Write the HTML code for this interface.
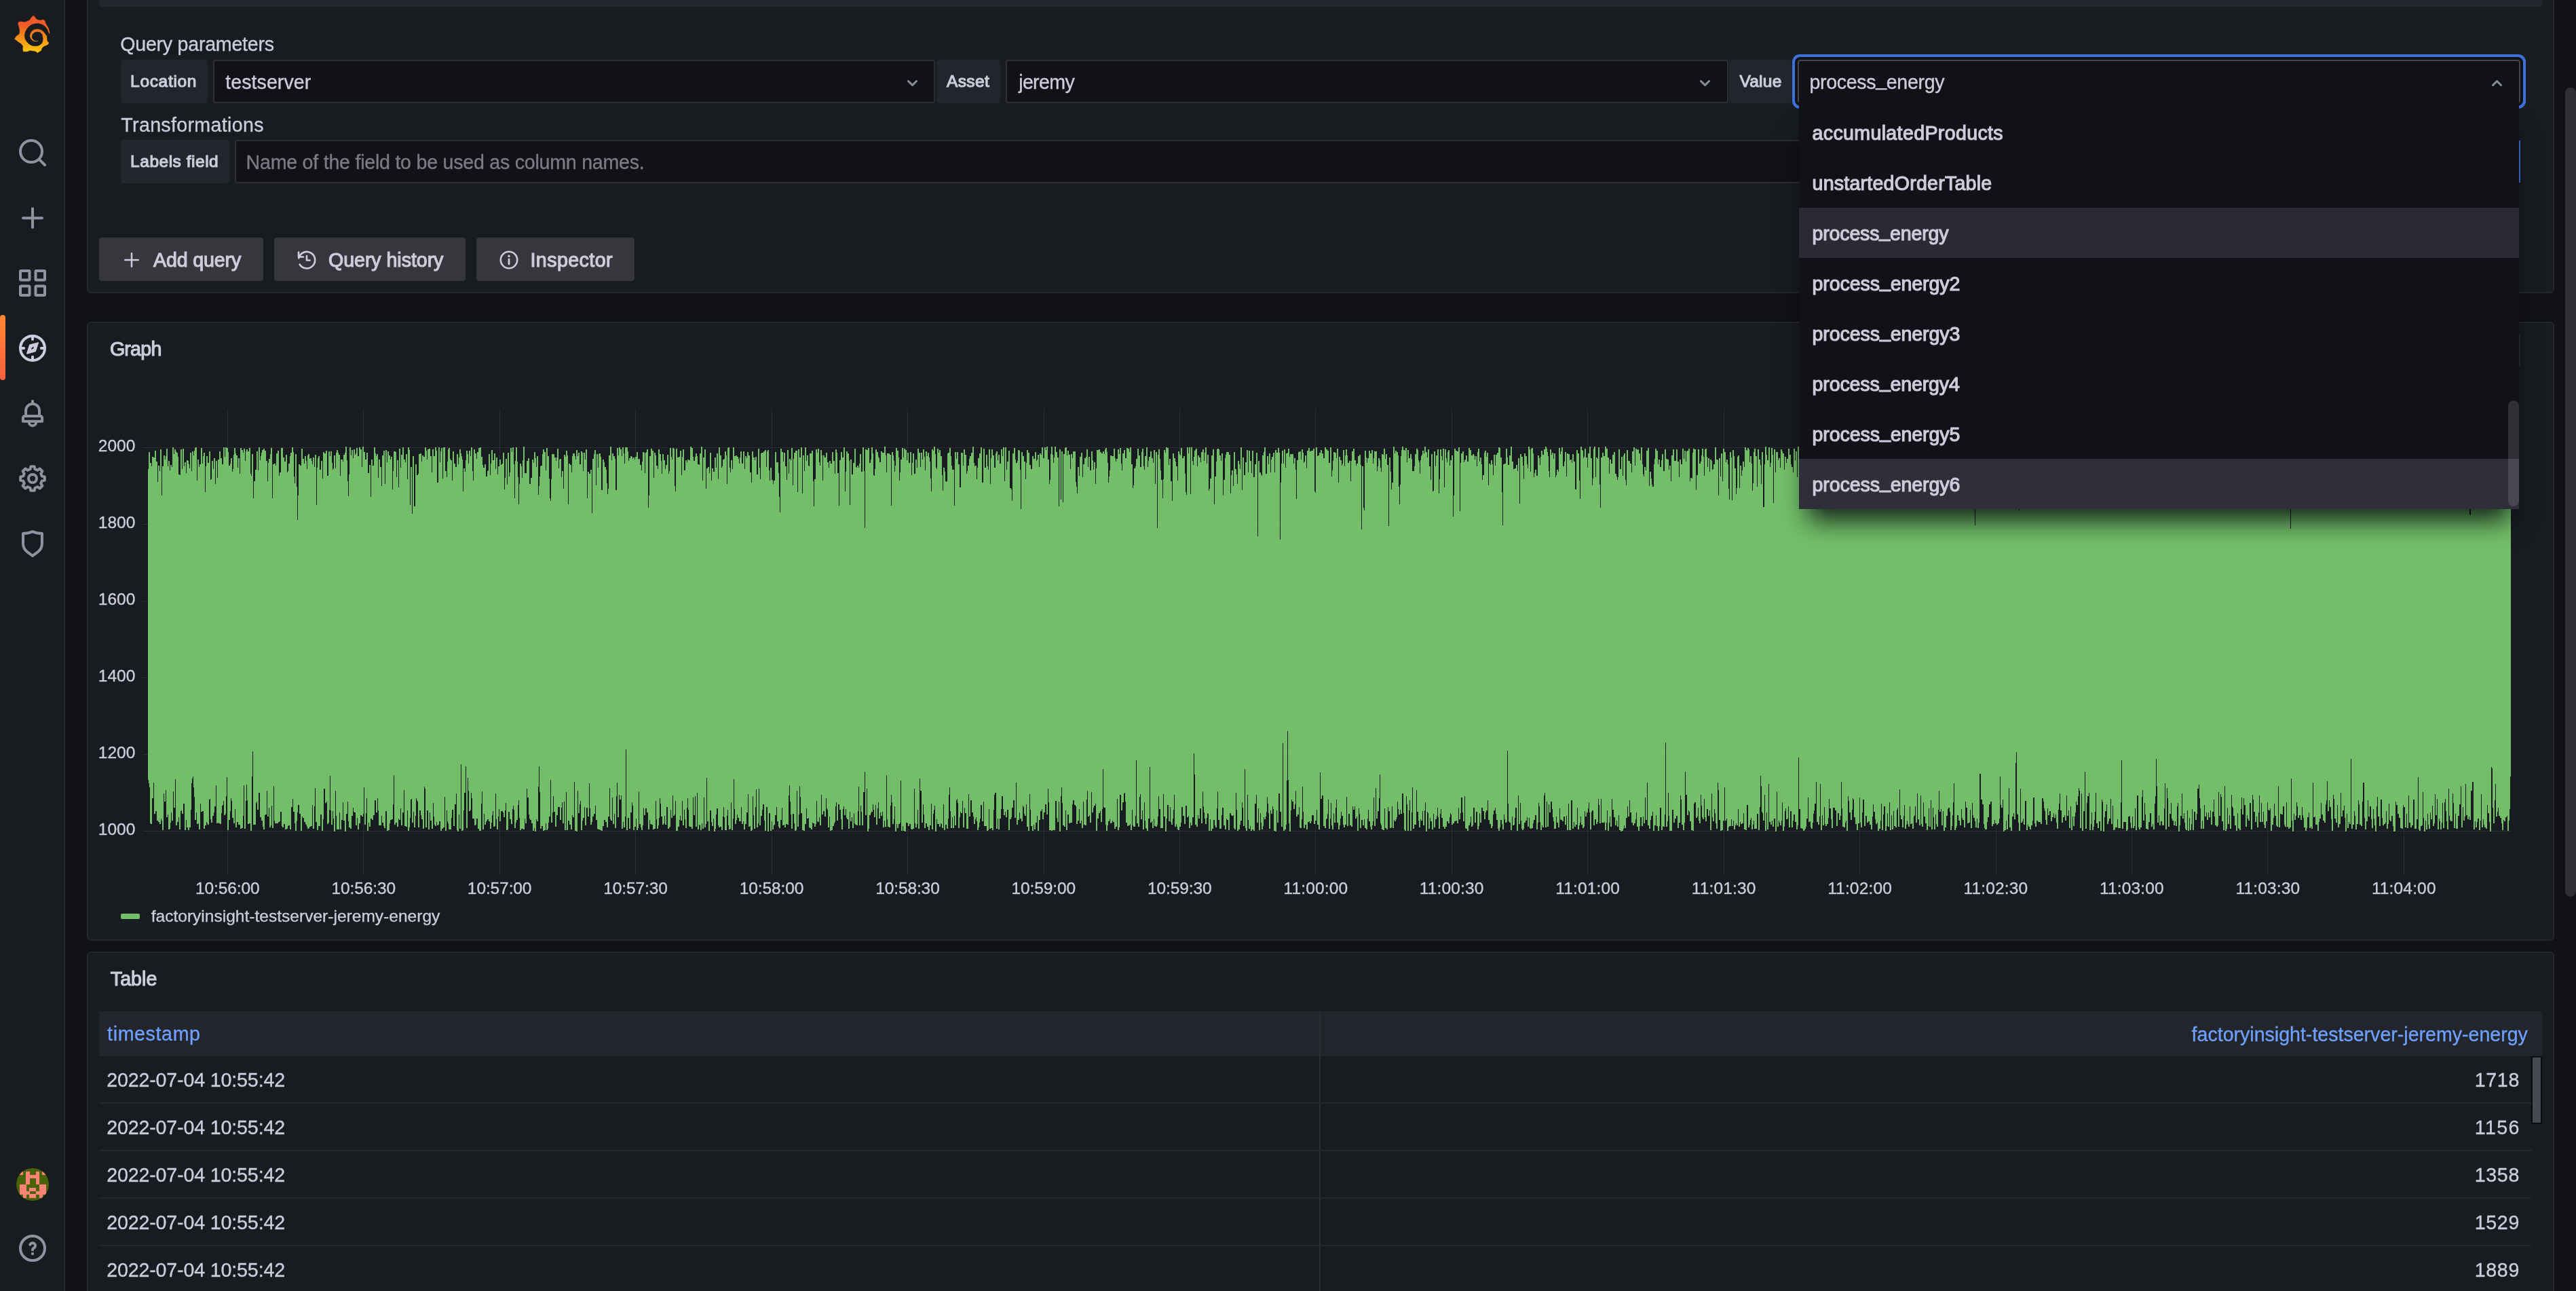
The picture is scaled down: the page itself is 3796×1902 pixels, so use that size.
<!DOCTYPE html>
<html><head><meta charset="utf-8"><title>Explore - Grafana</title><style>
html,body{margin:0;padding:0;}
body{width:3796px;height:1902px;overflow:hidden;background:#111217;position:relative;font-family:"Liberation Sans", sans-serif;}
.a{position:absolute;box-sizing:border-box;}
.t{white-space:pre;transform:translateZ(0);}
.u{position:relative;top:-4.5px;}
.p{background:#181b1f;border:2px solid #25272c;border-radius:6px;}
.lb{background:#22252b;border-radius:4px;}
.sel{background:#111217;border:2px solid #2d2e35;border-radius:4px;}
.btn{background:#35373d;border-radius:4px;}
</style></head><body>
<div class="a p" style="left:128px;top:-20px;width:3636px;height:452px;"></div>
<div class="a " style="left:146px;top:-10px;width:3600px;height:20px;background:#22252b;border-radius:4px;"></div>
<div class="a p" style="left:128px;top:474px;width:3636px;height:912px;"></div>
<div class="a p" style="left:128px;top:1402px;width:3636px;height:528px;"></div>
<div class="a " style="left:0px;top:0px;width:96px;height:1902px;background:#181b1f;border-right:2px solid #25272c;"></div>
<div class="a " style="left:0px;top:464px;width:8px;height:96px;background:linear-gradient(0deg,#f55f3e 0%,#ff8833 100%);border-radius:4px;"></div>
<svg class="a" style="left:0px;top:0px;" width="96" height="1902" viewBox="0 0 96 1902"><defs><linearGradient id="lg" x1="0" y1="0" x2="0" y2="1"><stop offset="0" stop-color="#f05a28"/><stop offset="0.25" stop-color="#f05a28"/><stop offset="1" stop-color="#fbca0a"/></linearGradient><clipPath id="av"><circle cx="48" cy="1745" r="24"/></clipPath></defs><polygon points="49.23,23.02 51.46,25.11 54.01,28.60 58.89,29.99 63.77,29.06 66.09,30.46 67.02,33.94 69.12,37.66 71.44,41.84 72.83,46.49 73.07,49.74 70.97,51.60 68.88,53.46 69.12,57.17 69.67,60.43 72.14,63.45 70.04,66.00 64.47,68.33 61.68,71.12 60.75,74.37 55.17,77.85 52.39,75.53 44.02,74.37 39.84,75.99 34.26,75.76 33.57,71.12 34.26,68.33 31.48,64.61 27.29,61.82 21.25,57.17 24.04,53.46 28.69,49.74 29.15,44.16 26.83,35.33 26.60,33.24 29.62,31.85 37.52,32.55 44.02,29.29 45.88,26.04" fill="url(#lg)" stroke="url(#lg)" stroke-width="0.3" stroke-linejoin="round"/><polygon points="73.76,50.44 73.07,50.20 71.44,48.35 69.58,43.23 66.33,39.05 62.14,36.26 57.50,34.87 52.85,34.78 48.20,35.80 44.02,38.12 40.30,41.84 37.52,46.49 36.22,52.06 37.05,57.17 39.38,61.36 43.09,65.07 47.28,67.17 51.46,67.86 55.64,67.40 59.36,65.77 61.68,63.45 62.84,60.43 63.17,56.71 62.52,52.76 61.68,50.20 59.36,47.88 55.17,46.95 51.46,47.65 48.67,49.74 47.18,52.99 47.51,56.25 49.13,58.57 51.92,59.96 54.71,60.06 56.20,59.41 56.34,60.43 54.25,61.50 50.53,61.36 47.28,59.50 44.95,56.71 43.65,53.46 44.25,49.74 46.35,46.02 50.06,43.23 54.71,42.30 58.89,43.00 62.61,45.09 65.86,48.35 67.95,51.60 69.12,52.76 73.76,52.76" fill="#181b1f" stroke="#181b1f" stroke-width="0.6" stroke-linejoin="round"/><g fill="none" stroke="#9192a0" stroke-width="4" stroke-linecap="round"><circle cx="46" cy="223" r="16"/><path d="M57.8,234.8L66,243"/></g><path d="M34,321.2H62M48,307.3V335.1" fill="none" stroke="#9192a0" stroke-width="4" stroke-linecap="round"/><rect x="30" y="399" width="13.5" height="13.5" rx="1" fill="none" stroke="#9192a0" stroke-width="4"/><rect x="52.5" y="399" width="13.5" height="13.5" rx="1" fill="none" stroke="#9192a0" stroke-width="4"/><rect x="30" y="421.5" width="13.5" height="13.5" rx="1" fill="none" stroke="#9192a0" stroke-width="4"/><rect x="52.5" y="421.5" width="13.5" height="13.5" rx="1" fill="none" stroke="#9192a0" stroke-width="4"/><circle cx="48" cy="512.9" r="18" fill="none" stroke="#ccccdc" stroke-width="4"/><path d="M48,496.9v3.2M48,528.9v-3.2M32,512.9h3.2M64,512.9h-3.2" stroke="#ccccdc" stroke-width="4" stroke-linecap="round" fill="none"/><path fill-rule="evenodd" fill="#ccccdc" stroke="#ccccdc" stroke-width="1.6" stroke-linejoin="round" d="M56.2,504.9L52.2,517.5L39.8,520.9L43.8,508.29999999999995Z M51.4,509.5L49.7,514.3L44.6,516.3L46.3,511.5Z"/><g fill="none" stroke="#9192a0" stroke-width="4" stroke-linecap="round" stroke-linejoin="round" transform="translate(18,579)"><path d="M30,12V14.5"/><path d="M20.1,34V26A9.95,10.1 0 0 1 40,26V34"/><path d="M18.6,34.1H41.4A2.7,2.7 0 0 1 44.1,36.8V41.8H15.9V36.8A2.7,2.7 0 0 1 18.6,34.1Z"/><path d="M24.8,43A5.2,5.2 0 0 0 35.2,43"/></g><polygon points="44.44,691.25 45.34,687.20 50.66,687.20 51.56,691.25 55.21,692.76 58.71,690.53 62.47,694.29 60.24,697.79 61.75,701.44 65.80,702.34 65.80,707.66 61.75,708.56 60.24,712.21 62.47,715.71 58.71,719.47 55.21,717.24 51.56,718.75 50.66,722.80 45.34,722.80 44.44,718.75 40.79,717.24 37.29,719.47 33.53,715.71 35.76,712.21 34.25,708.56 30.20,707.66 30.20,702.34 34.25,701.44 35.76,697.79 33.53,694.29 37.29,690.53 40.79,692.76" fill="none" stroke="#9192a0" stroke-width="4" stroke-linejoin="round"/><circle cx="48" cy="705" r="6" fill="none" stroke="#9192a0" stroke-width="4"/><path d="M34.03,786.10 Q42.16,785.87 47.97,783.17 Q53.78,785.87 61.91,786.10 V801.67 Q61.68,808.17 56.10,812.82 L47.97,818.86 L39.84,812.82 Q34.26,808.17 34.03,801.67 Z" fill="none" stroke="#9192a0" stroke-width="4" stroke-linejoin="round"/><g clip-path="url(#av)"><rect x="24" y="1721" width="48" height="48" fill="#4a630b"/><rect x="28.80" y="1725.80" width="5.20" height="5.20" fill="#ff8277" shape-rendering="crispEdges"/><rect x="38.40" y="1725.80" width="5.20" height="5.20" fill="#ff8277" shape-rendering="crispEdges"/><rect x="52.80" y="1725.80" width="5.20" height="5.20" fill="#ff8277" shape-rendering="crispEdges"/><rect x="62.40" y="1725.80" width="5.20" height="5.20" fill="#ff8277" shape-rendering="crispEdges"/><rect x="38.40" y="1730.60" width="5.20" height="5.20" fill="#ff8277" shape-rendering="crispEdges"/><rect x="43.20" y="1730.60" width="5.20" height="5.20" fill="#ff8277" shape-rendering="crispEdges"/><rect x="48.00" y="1730.60" width="5.20" height="5.20" fill="#ff8277" shape-rendering="crispEdges"/><rect x="52.80" y="1730.60" width="5.20" height="5.20" fill="#ff8277" shape-rendering="crispEdges"/><rect x="38.40" y="1735.40" width="5.20" height="5.20" fill="#ff8277" shape-rendering="crispEdges"/><rect x="52.80" y="1735.40" width="5.20" height="5.20" fill="#ff8277" shape-rendering="crispEdges"/><rect x="38.40" y="1740.20" width="5.20" height="5.20" fill="#ff8277" shape-rendering="crispEdges"/><rect x="52.80" y="1740.20" width="5.20" height="5.20" fill="#ff8277" shape-rendering="crispEdges"/><rect x="28.80" y="1745.00" width="5.20" height="5.20" fill="#ff8277" shape-rendering="crispEdges"/><rect x="33.60" y="1745.00" width="5.20" height="5.20" fill="#ff8277" shape-rendering="crispEdges"/><rect x="57.60" y="1745.00" width="5.20" height="5.20" fill="#ff8277" shape-rendering="crispEdges"/><rect x="62.40" y="1745.00" width="5.20" height="5.20" fill="#ff8277" shape-rendering="crispEdges"/><rect x="28.80" y="1749.80" width="5.20" height="5.20" fill="#ff8277" shape-rendering="crispEdges"/><rect x="33.60" y="1749.80" width="5.20" height="5.20" fill="#ff8277" shape-rendering="crispEdges"/><rect x="43.20" y="1749.80" width="5.20" height="5.20" fill="#ff8277" shape-rendering="crispEdges"/><rect x="48.00" y="1749.80" width="5.20" height="5.20" fill="#ff8277" shape-rendering="crispEdges"/><rect x="57.60" y="1749.80" width="5.20" height="5.20" fill="#ff8277" shape-rendering="crispEdges"/><rect x="62.40" y="1749.80" width="5.20" height="5.20" fill="#ff8277" shape-rendering="crispEdges"/><rect x="28.80" y="1754.60" width="5.20" height="5.20" fill="#ff8277" shape-rendering="crispEdges"/><rect x="33.60" y="1754.60" width="5.20" height="5.20" fill="#ff8277" shape-rendering="crispEdges"/><rect x="38.40" y="1754.60" width="5.20" height="5.20" fill="#ff8277" shape-rendering="crispEdges"/><rect x="52.80" y="1754.60" width="5.20" height="5.20" fill="#ff8277" shape-rendering="crispEdges"/><rect x="57.60" y="1754.60" width="5.20" height="5.20" fill="#ff8277" shape-rendering="crispEdges"/><rect x="62.40" y="1754.60" width="5.20" height="5.20" fill="#ff8277" shape-rendering="crispEdges"/><rect x="33.60" y="1759.40" width="5.20" height="5.20" fill="#ff8277" shape-rendering="crispEdges"/><rect x="43.20" y="1759.40" width="5.20" height="5.20" fill="#ff8277" shape-rendering="crispEdges"/><rect x="48.00" y="1759.40" width="5.20" height="5.20" fill="#ff8277" shape-rendering="crispEdges"/><rect x="57.60" y="1759.40" width="5.20" height="5.20" fill="#ff8277" shape-rendering="crispEdges"/></g><g fill="none" stroke="#9192a0" stroke-width="4" stroke-linecap="round" stroke-linejoin="round" transform="translate(18,1809)"><circle cx="30" cy="30" r="18"/><path d="M26.3,24.6A4,4 0 1 1 32.5,29.3Q30,30.6 30,32.6"/></g><circle cx="48" cy="1847.1" r="2.15" fill="#9192a0"/></svg>
<span class="a t" style="left:177.30px;top:51.29px;font-size:28.6px;line-height:28.6px;color:#ccccdc;letter-spacing:-0.249px;-webkit-text-stroke:0.35px #ccccdc;">Query parameters</span>
<div class="a lb" style="left:178px;top:88px;width:128px;height:64px;"></div>
<span class="a t" style="left:192.10px;top:108.26px;font-size:24.5px;line-height:24.5px;color:#ccccdc;letter-spacing:0.671px;-webkit-text-stroke:1.15px #ccccdc;">Location</span>
<div class="a sel" style="left:314px;top:88px;width:1064px;height:64px;"></div>
<span class="a t" style="left:332.30px;top:106.59px;font-size:28.6px;line-height:28.6px;color:#ccccdc;letter-spacing:0.043px;-webkit-text-stroke:0.35px #ccccdc;">testserver</span>
<div class="a lb" style="left:1380px;top:88px;width:94px;height:64px;"></div>
<span class="a t" style="left:1395.00px;top:108.26px;font-size:24.5px;line-height:24.5px;color:#ccccdc;letter-spacing:0.383px;-webkit-text-stroke:1.15px #ccccdc;">Asset</span>
<div class="a sel" style="left:1482px;top:88px;width:1065px;height:64px;"></div>
<span class="a t" style="left:1501.20px;top:106.59px;font-size:28.6px;line-height:28.6px;color:#ccccdc;letter-spacing:-0.660px;-webkit-text-stroke:0.35px #ccccdc;">jeremy</span>
<div class="a lb" style="left:2548px;top:88px;width:92px;height:64px;"></div>
<span class="a t" style="left:2563.40px;top:108.26px;font-size:24.5px;line-height:24.5px;color:#ccccdc;letter-spacing:0.271px;-webkit-text-stroke:1.15px #ccccdc;">Value</span>
<span class="a t" style="left:178.30px;top:169.99px;font-size:28.6px;line-height:28.6px;color:#ccccdc;letter-spacing:0.334px;-webkit-text-stroke:0.35px #ccccdc;">Transformations</span>
<div class="a lb" style="left:178px;top:206px;width:160px;height:64px;"></div>
<span class="a t" style="left:192.10px;top:226.46px;font-size:24.5px;line-height:24.5px;color:#ccccdc;letter-spacing:0.516px;-webkit-text-stroke:1.15px #ccccdc;">Labels field</span>
<div class="a sel" style="left:346px;top:206px;width:3368px;height:64px;"></div>
<div class="a " style="left:3712px;top:207px;width:2px;height:62px;background:#3d71d9;"></div>
<span class="a t" style="left:362.60px;top:225.19px;font-size:28.6px;line-height:28.6px;color:#7b7b86;letter-spacing:-0.238px;-webkit-text-stroke:0.35px #7b7b86;">Name of the field to be used as column names.</span>
<svg class="a" style="left:1337px;top:118px;" width="15" height="9" viewBox="0 0 15 9"><path d="M1.5,1.5 L7.5,7.5 L13.5,1.5" fill="none" stroke="#8a8b98" stroke-width="3" stroke-linecap="round" stroke-linejoin="round"/></svg>
<svg class="a" style="left:2505px;top:118px;" width="15" height="9" viewBox="0 0 15 9"><path d="M1.5,1.5 L7.5,7.5 L13.5,1.5" fill="none" stroke="#8a8b98" stroke-width="3" stroke-linecap="round" stroke-linejoin="round"/></svg>
<div class="a btn" style="left:146px;top:350px;width:242px;height:64px;"></div>
<span class="a t" style="left:226.10px;top:368.89px;font-size:28.6px;line-height:28.6px;color:#ccccdc;letter-spacing:-0.156px;-webkit-text-stroke:1.15px #ccccdc;">Add query</span>
<div class="a btn" style="left:404px;top:350px;width:282px;height:64px;"></div>
<span class="a t" style="left:484.00px;top:368.99px;font-size:28.6px;line-height:28.6px;color:#ccccdc;letter-spacing:-0.052px;-webkit-text-stroke:1.15px #ccccdc;">Query history</span>
<div class="a btn" style="left:702px;top:350px;width:233px;height:64px;"></div>
<span class="a t" style="left:781.50px;top:368.99px;font-size:28.6px;line-height:28.6px;color:#ccccdc;letter-spacing:0.426px;-webkit-text-stroke:1.15px #ccccdc;">Inspector</span>
<svg class="a" style="left:182px;top:371px;" width="24" height="24" viewBox="0 0 24 24"><path d="M12,2.3V21.7M2.3,12H21.7" stroke="#ccccdc" stroke-width="2.5" stroke-linecap="round" fill="none"/></svg>
<svg class="a" style="left:437px;top:368px;" width="30" height="30" viewBox="0 0 30 30"><g fill="none" stroke="#ccccdc" stroke-width="2.6" stroke-linecap="round" stroke-linejoin="round"><path d="M3.2,12.2 A12.2,12.2 0 1 1 4.6,21.5"/><path d="M3,3.5 V10.5 H10"/><path d="M15,9 V15.5 H19.5"/></g></svg>
<svg class="a" style="left:735px;top:368px;" width="30" height="30" viewBox="0 0 30 30"><circle cx="15" cy="15" r="12.2" fill="none" stroke="#ccccdc" stroke-width="2.6"/><path d="M15,14 V21" stroke="#ccccdc" stroke-width="2.8" stroke-linecap="round"/><circle cx="15" cy="9.3" r="1.7" fill="#ccccdc"/></svg>
<span class="a t" style="left:161.90px;top:500.09px;font-size:28.6px;line-height:28.6px;color:#ccccdc;letter-spacing:-0.767px;-webkit-text-stroke:1.15px #ccccdc;">Graph</span>
<div class="a " style="left:210px;top:659px;width:3490px;height:1px;background:#2b2e33;"></div>
<span class="a t" style="left:144.70px;top:645.46px;font-size:24.5px;line-height:24.5px;color:#ccccdc;letter-spacing:0.074px;-webkit-text-stroke:0.35px #ccccdc;">2000</span>
<div class="a " style="left:210px;top:772px;width:3490px;height:1px;background:#2b2e33;"></div>
<span class="a t" style="left:144.70px;top:758.46px;font-size:24.5px;line-height:24.5px;color:#ccccdc;letter-spacing:0.074px;-webkit-text-stroke:0.35px #ccccdc;">1800</span>
<div class="a " style="left:210px;top:885px;width:3490px;height:1px;background:#2b2e33;"></div>
<span class="a t" style="left:144.70px;top:871.46px;font-size:24.5px;line-height:24.5px;color:#ccccdc;letter-spacing:0.074px;-webkit-text-stroke:0.35px #ccccdc;">1600</span>
<div class="a " style="left:210px;top:998px;width:3490px;height:1px;background:#2b2e33;"></div>
<span class="a t" style="left:144.70px;top:984.46px;font-size:24.5px;line-height:24.5px;color:#ccccdc;letter-spacing:0.074px;-webkit-text-stroke:0.35px #ccccdc;">1400</span>
<div class="a " style="left:210px;top:1111px;width:3490px;height:1px;background:#2b2e33;"></div>
<span class="a t" style="left:144.70px;top:1097.46px;font-size:24.5px;line-height:24.5px;color:#ccccdc;letter-spacing:0.074px;-webkit-text-stroke:0.35px #ccccdc;">1200</span>
<div class="a " style="left:210px;top:1224px;width:3490px;height:1px;background:#2b2e33;"></div>
<span class="a t" style="left:144.70px;top:1210.46px;font-size:24.5px;line-height:24.5px;color:#ccccdc;letter-spacing:0.074px;-webkit-text-stroke:0.35px #ccccdc;">1000</span>
<div class="a " style="left:335px;top:602px;width:1px;height:687px;background:#2b2e33;"></div>
<span class="a t" style="left:288.00px;top:1296.86px;font-size:24.5px;line-height:24.5px;color:#ccccdc;letter-spacing:-0.106px;-webkit-text-stroke:0.35px #ccccdc;">10:56:00</span>
<div class="a " style="left:535px;top:602px;width:1px;height:687px;background:#2b2e33;"></div>
<span class="a t" style="left:488.43px;top:1296.86px;font-size:24.5px;line-height:24.5px;color:#ccccdc;letter-spacing:-0.106px;-webkit-text-stroke:0.35px #ccccdc;">10:56:30</span>
<div class="a " style="left:736px;top:602px;width:1px;height:687px;background:#2b2e33;"></div>
<span class="a t" style="left:688.86px;top:1296.86px;font-size:24.5px;line-height:24.5px;color:#ccccdc;letter-spacing:-0.106px;-webkit-text-stroke:0.35px #ccccdc;">10:57:00</span>
<div class="a " style="left:936px;top:602px;width:1px;height:687px;background:#2b2e33;"></div>
<span class="a t" style="left:889.29px;top:1296.86px;font-size:24.5px;line-height:24.5px;color:#ccccdc;letter-spacing:-0.106px;-webkit-text-stroke:0.35px #ccccdc;">10:57:30</span>
<div class="a " style="left:1137px;top:602px;width:1px;height:687px;background:#2b2e33;"></div>
<span class="a t" style="left:1089.72px;top:1296.86px;font-size:24.5px;line-height:24.5px;color:#ccccdc;letter-spacing:-0.106px;-webkit-text-stroke:0.35px #ccccdc;">10:58:00</span>
<div class="a " style="left:1337px;top:602px;width:1px;height:687px;background:#2b2e33;"></div>
<span class="a t" style="left:1290.15px;top:1296.86px;font-size:24.5px;line-height:24.5px;color:#ccccdc;letter-spacing:-0.106px;-webkit-text-stroke:0.35px #ccccdc;">10:58:30</span>
<div class="a " style="left:1538px;top:602px;width:1px;height:687px;background:#2b2e33;"></div>
<span class="a t" style="left:1490.58px;top:1296.86px;font-size:24.5px;line-height:24.5px;color:#ccccdc;letter-spacing:-0.106px;-webkit-text-stroke:0.35px #ccccdc;">10:59:00</span>
<div class="a " style="left:1738px;top:602px;width:1px;height:687px;background:#2b2e33;"></div>
<span class="a t" style="left:1691.01px;top:1296.86px;font-size:24.5px;line-height:24.5px;color:#ccccdc;letter-spacing:-0.106px;-webkit-text-stroke:0.35px #ccccdc;">10:59:30</span>
<div class="a " style="left:1938px;top:602px;width:1px;height:687px;background:#2b2e33;"></div>
<span class="a t" style="left:1891.44px;top:1296.86px;font-size:24.5px;line-height:24.5px;color:#ccccdc;letter-spacing:0.154px;-webkit-text-stroke:0.35px #ccccdc;">11:00:00</span>
<div class="a " style="left:2139px;top:602px;width:1px;height:687px;background:#2b2e33;"></div>
<span class="a t" style="left:2091.87px;top:1296.86px;font-size:24.5px;line-height:24.5px;color:#ccccdc;letter-spacing:0.154px;-webkit-text-stroke:0.35px #ccccdc;">11:00:30</span>
<div class="a " style="left:2339px;top:602px;width:1px;height:687px;background:#2b2e33;"></div>
<span class="a t" style="left:2292.30px;top:1296.86px;font-size:24.5px;line-height:24.5px;color:#ccccdc;letter-spacing:0.154px;-webkit-text-stroke:0.35px #ccccdc;">11:01:00</span>
<div class="a " style="left:2540px;top:602px;width:1px;height:687px;background:#2b2e33;"></div>
<span class="a t" style="left:2492.73px;top:1296.86px;font-size:24.5px;line-height:24.5px;color:#ccccdc;letter-spacing:0.154px;-webkit-text-stroke:0.35px #ccccdc;">11:01:30</span>
<div class="a " style="left:2740px;top:602px;width:1px;height:687px;background:#2b2e33;"></div>
<span class="a t" style="left:2693.16px;top:1296.86px;font-size:24.5px;line-height:24.5px;color:#ccccdc;letter-spacing:0.154px;-webkit-text-stroke:0.35px #ccccdc;">11:02:00</span>
<div class="a " style="left:2941px;top:602px;width:1px;height:687px;background:#2b2e33;"></div>
<span class="a t" style="left:2893.59px;top:1296.86px;font-size:24.5px;line-height:24.5px;color:#ccccdc;letter-spacing:0.154px;-webkit-text-stroke:0.35px #ccccdc;">11:02:30</span>
<div class="a " style="left:3141px;top:602px;width:1px;height:687px;background:#2b2e33;"></div>
<span class="a t" style="left:3094.02px;top:1296.86px;font-size:24.5px;line-height:24.5px;color:#ccccdc;letter-spacing:0.154px;-webkit-text-stroke:0.35px #ccccdc;">11:03:00</span>
<div class="a " style="left:3341px;top:602px;width:1px;height:687px;background:#2b2e33;"></div>
<span class="a t" style="left:3294.45px;top:1296.86px;font-size:24.5px;line-height:24.5px;color:#ccccdc;letter-spacing:0.154px;-webkit-text-stroke:0.35px #ccccdc;">11:03:30</span>
<div class="a " style="left:3542px;top:602px;width:1px;height:687px;background:#2b2e33;"></div>
<span class="a t" style="left:3494.88px;top:1296.86px;font-size:24.5px;line-height:24.5px;color:#ccccdc;letter-spacing:0.154px;-webkit-text-stroke:0.35px #ccccdc;">11:04:00</span>
<svg class="a" style="left:218px;top:657px;" width="3482" height="570" viewBox="0 0 3482 570"><path d="M0.5,34V492M1.5,9V497M2.5,9V503M3.5,25V556M4.5,25V557M5.5,30V557M6.5,16V519M7.5,16V519M8.5,17V496M9.5,17V542M10.5,7V542M11.5,7V538M12.5,23V538M13.5,23V552M14.5,53V552M15.5,29V554M16.5,29V554M17.5,37V557M18.5,5V557M19.5,5V549M20.5,73V552M21.5,30V566M22.5,30V566M23.5,14V512M24.5,14V524M25.5,20V524M26.5,15V507M27.5,4V547M28.5,4V547M29.5,30V543M30.5,22V565M31.5,22V565M32.5,36V564M33.5,28V555M34.5,28V540M35.5,31V552M36.5,2V552M37.5,2V509M38.5,12V533M39.5,5V533M40.5,5V491M41.5,8V559M42.5,10V559M43.5,10V554M44.5,16V554M45.5,42V547M46.5,42V565M47.5,43V565M48.5,5V538M49.5,5V537M50.5,34V542M51.5,4V542M52.5,4V527M53.5,30V527M54.5,24V566M55.5,24V566M56.5,40V551M57.5,21V562M58.5,21V562M59.5,22V566M60.5,27V566M61.5,33V562M62.5,10V562M63.5,10V536M64.5,37V497M65.5,8V490M66.5,8V487M67.5,14V503M68.5,7V517M69.5,3V551M70.5,2V551M71.5,2V540M72.5,51V557M73.5,20V557M74.5,20V556M75.5,31V565M76.5,27V565M77.5,27V527M78.5,3V539M79.5,3V539M80.5,26V538M81.5,15V538M82.5,10V564M83.5,10V564M84.5,68V559M85.5,30V559M86.5,15V554M87.5,15V556M88.5,25V558M89.5,25V558M90.5,8V521M91.5,8V520M92.5,50V550M93.5,49V555M94.5,22V555M95.5,22V545M96.5,34V545M97.5,18V540M98.5,18V531M99.5,56V531M100.5,22V500M101.5,22V556M102.5,47V556M103.5,20V555M104.5,20V556M105.5,8V556M106.5,8V557M107.5,18V557M108.5,18V541M109.5,27V530M110.5,27V529M111.5,2V523M112.5,2V544M113.5,16V544M114.5,2V542M115.5,2V516M116.5,3V488M117.5,3V566M118.5,9V566M119.5,29V551M120.5,29V551M121.5,26V538M122.5,18V519M123.5,18V523M124.5,38V548M125.5,34V548M126.5,13V556M127.5,3V556M128.5,3V535M129.5,11V562M130.5,14V562M131.5,14V554M132.5,32V554M133.5,18V558M134.5,18V558M135.5,41V558M136.5,3V564M137.5,3V564M138.5,6V563M139.5,6V563M140.5,10V545M141.5,4V500M142.5,4V564M143.5,22V564M144.5,8V523M145.5,5V499M146.5,5V522M147.5,8V557M148.5,8V557M149.5,3V556M150.5,3V556M151.5,41V567M152.5,44V567M153.5,12V487M154.5,12V450M155.5,77V558M156.5,52V558M157.5,52V558M158.5,35V558M159.5,35V526M160.5,8V524M161.5,8V536M162.5,36V536M163.5,2V511M164.5,2V511M165.5,21V547M166.5,15V547M167.5,10V552M168.5,6V552M169.5,6V561M170.5,4V565M171.5,4V565M172.5,7V544M173.5,7V543M174.5,22V543M175.5,22V508M176.5,52V546M177.5,25V546M178.5,19V533M179.5,19V562M180.5,12V562M181.5,3V559M182.5,3V530M183.5,77V563M184.5,27V563M185.5,27V501M186.5,26V552M187.5,26V556M188.5,29V556M189.5,11V556M190.5,11V556M191.5,7V556M192.5,7V554M193.5,44V554M194.5,39V553M195.5,39V539M196.5,3V539M197.5,3V560M198.5,3V562M199.5,17V562M200.5,17V557M201.5,23V557M202.5,23V565M203.5,13V565M204.5,13V564M205.5,39V564M206.5,37V560M207.5,26V559M208.5,26V559M209.5,15V565M210.5,10V565M211.5,10V532M212.5,2V532M213.5,2V520M214.5,9V539M215.5,45V539M216.5,55V556M217.5,12V567M218.5,12V567M219.5,60V553M220.5,109V540M221.5,73V529M222.5,27V529M223.5,27V542M224.5,29V542M225.5,29V567M226.5,4V567M227.5,4V546M228.5,19V548M229.5,19V548M230.5,26V554M231.5,15V554M232.5,15V557M233.5,22V558M234.5,34V561M235.5,14V564M236.5,12V564M237.5,12V563M238.5,19V561M239.5,18V561M240.5,18V560M241.5,22V560M242.5,27V529M243.5,17V564M244.5,17V564M245.5,31V531M246.5,13V504M247.5,13V554M248.5,87V554M249.5,32V566M250.5,18V566M251.5,15V560M252.5,15V560M253.5,35V560M254.5,35V543M255.5,22V543M256.5,22V567M257.5,48V567M258.5,9V550M259.5,9V505M260.5,11V505M261.5,11V526M262.5,7V526M263.5,7V524M264.5,44V557M265.5,44V557M266.5,8V555M267.5,8V536M268.5,15V486M269.5,8V537M270.5,8V558M271.5,25V558M272.5,35V538M273.5,33V549M274.5,14V568M275.5,14V568M276.5,33V508M277.5,10V545M278.5,6V565M279.5,6V565M280.5,10V565M281.5,13V565M282.5,13V540M283.5,44V565M284.5,20V565M285.5,20V551M286.5,20V551M287.5,23V525M288.5,13V552M289.5,13V552M290.5,10V568M291.5,1V568M292.5,1V542M293.5,21V542M294.5,52V524M295.5,74V553M296.5,42V562M297.5,2V562M298.5,2V564M299.5,14V564M300.5,6V545M301.5,6V545M302.5,18V533M303.5,5V539M304.5,5V540M305.5,13V540M306.5,11V559M307.5,3V559M308.5,3V548M309.5,15V565M310.5,15V565M311.5,2V556M312.5,2V556M313.5,5V544M314.5,5V544M315.5,31V546M316.5,1V546M317.5,1V542M318.5,9V503M319.5,9V558M320.5,20V558M321.5,20V541M322.5,10V519M323.5,10V567M324.5,40V567M325.5,40V555M326.5,28V561M327.5,28V561M328.5,75V549M329.5,20V549M330.5,20V551M331.5,29V551M332.5,29V544M333.5,2V544M334.5,2V522M335.5,11V522M336.5,15V540M337.5,12V540M338.5,12V519M339.5,47V537M340.5,20V559M341.5,20V559M342.5,31V559M343.5,31V559M344.5,59V545M345.5,14V555M346.5,14V555M347.5,7V560M348.5,7V563M349.5,56V563M350.5,6V538M351.5,6V538M352.5,24V567M353.5,8V567M354.5,8V566M355.5,14V566M356.5,14V556M357.5,20V551M358.5,16V551M359.5,16V550M360.5,64V550M361.5,37V528M362.5,8V485M363.5,8V558M364.5,8V558M365.5,9V555M366.5,46V555M367.5,21V561M368.5,21V561M369.5,61V549M370.5,4V551M371.5,4V551M372.5,32V534M373.5,13V559M374.5,13V559M375.5,2V540M376.5,2V540M377.5,20V507M378.5,20V560M379.5,24V560M380.5,12V561M381.5,12V561M382.5,49V537M383.5,2V567M384.5,2V567M385.5,6V562M386.5,87V548M387.5,31V521M388.5,31V520M389.5,100V555M390.5,15V555M391.5,15V539M392.5,89V562M393.5,89V562M394.5,27V545M395.5,27V519M396.5,43V522M397.5,43V524M398.5,41V562M399.5,12V562M400.5,12V537M401.5,11V537M402.5,11V544M403.5,23V550M404.5,14V550M405.5,14V564M406.5,16V564M407.5,16V502M408.5,2V505M409.5,2V562M410.5,7V562M411.5,20V537M412.5,5V537M413.5,5V565M414.5,4V565M415.5,4V540M416.5,15V552M417.5,15V552M418.5,39V564M419.5,5V564M420.5,5V526M421.5,15V546M422.5,15V558M423.5,2V560M424.5,2V560M425.5,7V554M426.5,54V559M427.5,54V559M428.5,2V558M429.5,2V553M430.5,24V553M431.5,8V567M432.5,3V567M433.5,3V564M434.5,48V564M435.5,2V562M436.5,2V562M437.5,2V517M438.5,37V567M439.5,37V567M440.5,46V537M441.5,23V553M442.5,5V556M443.5,3V565M444.5,3V565M445.5,19V565M446.5,21V565M447.5,21V548M448.5,51V536M449.5,8V536M450.5,8V560M451.5,26V560M452.5,26V528M453.5,31V528M454.5,31V512M455.5,12V566M456.5,12V568M457.5,27V568M458.5,17V543M459.5,5V564M460.5,5V564M461.5,11V469M462.5,15V567M463.5,20V567M464.5,67V566M465.5,33V537M466.5,33V511M467.5,38V511M468.5,21V472M469.5,7V563M470.5,7V563M471.5,12V489M472.5,26V508M473.5,7V538M474.5,7V538M475.5,15V536M476.5,2V511M477.5,2V519M478.5,37V549M479.5,51V549M480.5,5V549M481.5,5V559M482.5,11V559M483.5,11V558M484.5,19V549M485.5,9V549M486.5,9V564M487.5,3V564M488.5,3V567M489.5,2V567M490.5,2V567M491.5,16V527M492.5,16V509M493.5,28V565M494.5,32V565M495.5,32V542M496.5,27V558M497.5,27V558M498.5,45V554M499.5,45V552M500.5,37V550M501.5,36V550M502.5,12V553M503.5,12V553M504.5,43V564M505.5,26V564M506.5,6V555M507.5,6V544M508.5,21V538M509.5,21V561M510.5,11V561M511.5,11V560M512.5,34V512M513.5,17V550M514.5,17V565M515.5,42V565M516.5,30V546M517.5,30V535M518.5,20V553M519.5,20V553M520.5,28V538M521.5,27V538M522.5,26V538M523.5,10V540M524.5,10V547M525.5,64V547M526.5,47V537M527.5,19V526M528.5,19V566M529.5,57V566M530.5,10V565M531.5,10V539M532.5,45V539M533.5,39V550M534.5,3V550M535.5,3V557M536.5,9V557M537.5,2V535M538.5,2V530M539.5,27V536M540.5,77V563M541.5,22V563M542.5,2V555M543.5,2V551M544.5,23V551M545.5,46V529M546.5,86V522M547.5,56V548M548.5,26V566M549.5,26V566M550.5,30V564M551.5,47V564M552.5,21V564M553.5,1V565M554.5,1V565M555.5,40V549M556.5,40V556M557.5,40V556M558.5,22V505M559.5,22V518M560.5,18V518M561.5,18V543M562.5,56V549M563.5,56V551M564.5,47V551M565.5,47V556M566.5,20V556M567.5,20V567M568.5,25V567M569.5,9V563M570.5,9V568M571.5,18V568M572.5,31V550M573.5,15V553M574.5,15V553M575.5,72V502M576.5,59V472M577.5,45V510M578.5,30V564M579.5,29V564M580.5,29V560M581.5,12V560M582.5,5V567M583.5,5V567M584.5,9V566M585.5,9V566M586.5,36V556M587.5,3V566M588.5,3V566M589.5,15V564M590.5,15V555M591.5,48V546M592.5,77V546M593.5,81V492M594.5,49V555M595.5,12V555M596.5,12V540M597.5,12V516M598.5,12V539M599.5,17V539M600.5,17V561M601.5,22V561M602.5,17V544M603.5,4V544M604.5,4V532M605.5,33V532M606.5,20V532M607.5,19V551M608.5,19V551M609.5,46V533M610.5,37V525M611.5,37V556M612.5,63V556M613.5,13V524M614.5,13V566M615.5,16V566M616.5,7V510M617.5,7V566M618.5,14V566M619.5,86V552M620.5,26V552M621.5,26V558M622.5,28V558M623.5,28V565M624.5,39V565M625.5,15V544M626.5,11V547M627.5,11V547M628.5,11V495M629.5,15V567M630.5,20V567M631.5,6V568M632.5,6V568M633.5,15V508M634.5,10V541M635.5,10V541M636.5,27V528M637.5,27V523M638.5,8V566M639.5,8V566M640.5,10V552M641.5,37V548M642.5,10V548M643.5,10V532M644.5,20V559M645.5,5V559M646.5,5V533M647.5,77V533M648.5,38V546M649.5,38V546M650.5,41V497M651.5,41V534M652.5,35V558M653.5,35V558M654.5,99V554M655.5,19V546M656.5,19V546M657.5,12V542M658.5,6V542M659.5,6V530M660.5,58V551M661.5,12V551M662.5,12V564M663.5,32V565M664.5,12V565M665.5,11V565M666.5,11V566M667.5,16V566M668.5,65V567M669.5,65V567M670.5,20V560M671.5,20V560M672.5,24V551M673.5,31V551M674.5,31V554M675.5,35V554M676.5,55V562M677.5,71V562M678.5,63V546M679.5,14V546M680.5,14V504M681.5,1V550M682.5,1V552M683.5,21V552M684.5,11V518M685.5,11V557M686.5,15V557M687.5,15V542M688.5,19V563M689.5,65V563M690.5,65V516M691.5,3V496M692.5,3V547M693.5,14V547M694.5,2V514M695.5,2V521M696.5,5V521M697.5,5V515M698.5,15V564M699.5,2V564M700.5,2V554M701.5,11V562M702.5,26V562M703.5,2V546M704.5,2V447M705.5,2V566M706.5,2V566M707.5,8V548M708.5,22V548M709.5,18V564M710.5,18V564M711.5,15V540M712.5,15V540M713.5,16V525M714.5,19V530M715.5,17V566M716.5,17V566M717.5,20V561M718.5,16V561M719.5,16V549M720.5,9V566M721.5,9V566M722.5,20V563M723.5,19V509M724.5,19V557M725.5,28V557M726.5,28V562M727.5,36V566M728.5,23V566M729.5,9V559M730.5,9V533M731.5,10V544M732.5,40V544M733.5,10V534M734.5,9V534M735.5,5V540M736.5,5V540M737.5,91V565M738.5,73V565M739.5,15V551M740.5,15V557M741.5,4V557M742.5,4V558M743.5,7V558M744.5,7V565M745.5,47V565M746.5,10V564M747.5,10V564M748.5,14V523M749.5,29V550M750.5,29V564M751.5,34V564M752.5,5V559M753.5,5V548M754.5,12V519M755.5,12V527M756.5,22V546M757.5,41V546M758.5,12V558M759.5,12V558M760.5,21V556M761.5,21V545M762.5,34V558M763.5,28V558M764.5,28V532M765.5,13V532M766.5,13V564M767.5,41V564M768.5,37V562M769.5,3V561M770.5,3V536M771.5,16V548M772.5,20V548M773.5,3V515M774.5,3V545M775.5,4V545M776.5,59V543M777.5,67V523M778.5,4V567M779.5,4V567M780.5,17V567M781.5,17V561M782.5,16V561M783.5,16V551M784.5,7V545M785.5,7V552M786.5,43V552M787.5,16V523M788.5,5V559M789.5,5V559M790.5,36V536M791.5,36V550M792.5,21V563M793.5,21V563M794.5,24V533M795.5,20V519M796.5,20V536M797.5,21V560M798.5,21V561M799.5,1V561M800.5,1V561M801.5,3V564M802.5,3V564M803.5,16V518M804.5,22V544M805.5,22V544M806.5,16V516M807.5,11V561M808.5,11V561M809.5,15V511M810.5,27V565M811.5,27V565M812.5,28V558M813.5,11V559M814.5,11V566M815.5,1V566M816.5,1V556M817.5,51V564M818.5,17V564M819.5,17V518M820.5,5V562M821.5,5V562M822.5,63V557M823.5,33V489M824.5,33V553M825.5,31V553M826.5,31V567M827.5,40V567M828.5,10V537M829.5,10V537M830.5,51V554M831.5,33V560M832.5,33V560M833.5,38V549M834.5,38V568M835.5,17V568M836.5,17V564M837.5,32V543M838.5,11V534M839.5,11V534M840.5,49V559M841.5,2V562M842.5,2V562M843.5,14V561M844.5,14V561M845.5,32V566M846.5,30V566M847.5,20V546M848.5,20V532M849.5,19V547M850.5,8V566M851.5,8V566M852.5,14V566M853.5,56V545M854.5,3V536M855.5,2V559M856.5,2V565M857.5,32V565M858.5,39V564M859.5,21V525M860.5,21V566M861.5,34V566M862.5,2V549M863.5,2V491M864.5,15V535M865.5,15V557M866.5,14V557M867.5,14V551M868.5,16V543M869.5,16V548M870.5,19V548M871.5,26V553M872.5,17V553M873.5,8V553M874.5,8V532M875.5,26V557M876.5,26V557M877.5,8V553M878.5,8V565M879.5,34V565M880.5,15V557M881.5,15V557M882.5,18V540M883.5,9V540M884.5,9V513M885.5,14V561M886.5,14V561M887.5,39V560M888.5,39V567M889.5,54V567M890.5,8V566M891.5,8V516M892.5,17V544M893.5,17V564M894.5,21V564M895.5,16V532M896.5,16V506M897.5,42V562M898.5,42V562M899.5,4V556M900.5,4V505M901.5,32V559M902.5,49V559M903.5,11V545M904.5,10V545M905.5,10V536M906.5,10V528M907.5,8V528M908.5,8V552M909.5,6V567M910.5,6V567M911.5,31V532M912.5,8V532M913.5,6V568M914.5,6V568M915.5,36V541M916.5,51V541M917.5,32V567M918.5,32V567M919.5,50V553M920.5,50V565M921.5,56V565M922.5,51V559M923.5,51V558M924.5,9V544M925.5,9V544M926.5,24V532M927.5,24V553M928.5,24V553M929.5,40V561M930.5,75V563M931.5,98V563M932.5,4V551M933.5,4V551M934.5,9V533M935.5,9V559M936.5,23V559M937.5,10V558M938.5,10V562M939.5,30V562M940.5,30V557M941.5,50V557M942.5,6V558M943.5,6V558M944.5,41V515M945.5,19V500M946.5,19V524M947.5,21V543M948.5,3V564M949.5,3V564M950.5,58V542M951.5,19V542M952.5,10V556M953.5,10V567M954.5,7V567M955.5,7V566M956.5,7V508M957.5,68V561M958.5,5V561M959.5,5V543M960.5,17V501M961.5,17V517M962.5,2V541M963.5,2V541M964.5,70V566M965.5,14V566M966.5,14V567M967.5,37V567M968.5,2V557M969.5,2V557M970.5,22V534M971.5,14V549M972.5,14V549M973.5,29V548M974.5,30V562M975.5,11V563M976.5,11V563M977.5,11V565M978.5,7V565M979.5,7V555M980.5,52V556M981.5,89V556M982.5,49V561M983.5,49V561M984.5,5V557M985.5,5V523M986.5,10V553M987.5,4V554M988.5,4V554M989.5,24V547M990.5,29V559M991.5,6V559M992.5,6V514M993.5,14V543M994.5,51V543M995.5,14V538M996.5,14V538M997.5,17V546M998.5,17V546M999.5,10V519M1000.5,10V534M1001.5,24V536M1002.5,24V562M1003.5,32V562M1004.5,22V546M1005.5,22V567M1006.5,26V567M1007.5,26V566M1008.5,9V566M1009.5,9V560M1010.5,22V560M1011.5,22V556M1012.5,41V554M1013.5,5V531M1014.5,5V525M1015.5,10V552M1016.5,40V552M1017.5,40V528M1018.5,88V528M1019.5,21V536M1020.5,21V536M1021.5,9V550M1022.5,9V565M1023.5,17V565M1024.5,17V535M1025.5,2V531M1026.5,2V544M1027.5,67V544M1028.5,38V535M1029.5,8V548M1030.5,8V550M1031.5,11V550M1032.5,11V564M1033.5,22V564M1034.5,87V539M1035.5,20V553M1036.5,20V553M1037.5,42V547M1038.5,42V563M1039.5,25V563M1040.5,25V541M1041.5,4V556M1042.5,4V558M1043.5,31V558M1044.5,32V559M1045.5,29V559M1046.5,29V538M1047.5,32V502M1048.5,26V559M1049.5,12V559M1050.5,12V530M1051.5,38V539M1052.5,38V559M1053.5,2V559M1054.5,2V510M1055.5,37V510M1056.5,121V480M1057.5,5V544M1058.5,5V544M1059.5,6V505M1060.5,6V568M1061.5,3V568M1062.5,3V564M1063.5,25V544M1064.5,25V544M1065.5,20V541M1066.5,2V539M1067.5,2V539M1068.5,11V528M1069.5,43V536M1070.5,44V547M1071.5,34V547M1072.5,5V529M1073.5,5V558M1074.5,9V558M1075.5,9V534M1076.5,16V525M1077.5,18V549M1078.5,24V549M1079.5,24V540M1080.5,8V545M1081.5,8V545M1082.5,10V539M1083.5,10V562M1084.5,10V562M1085.5,1V552M1086.5,1V561M1087.5,14V561M1088.5,39V485M1089.5,11V550M1090.5,11V561M1091.5,11V561M1092.5,11V562M1093.5,13V562M1094.5,13V530M1095.5,88V514M1096.5,9V525M1097.5,9V557M1098.5,14V557M1099.5,22V550M1100.5,38V531M1101.5,29V568M1102.5,3V568M1103.5,3V557M1104.5,7V563M1105.5,7V563M1106.5,17V557M1107.5,51V557M1108.5,39V555M1109.5,20V493M1110.5,20V567M1111.5,3V567M1112.5,3V560M1113.5,17V567M1114.5,4V567M1115.5,4V568M1116.5,6V568M1117.5,6V555M1118.5,21V555M1119.5,10V556M1120.5,10V560M1121.5,25V560M1122.5,25V557M1123.5,9V557M1124.5,9V564M1125.5,43V565M1126.5,25V565M1127.5,11V564M1128.5,11V564M1129.5,41V505M1130.5,41V556M1131.5,20V562M1132.5,20V562M1133.5,32V557M1134.5,4V536M1135.5,4V564M1136.5,10V564M1137.5,10V490M1138.5,31V508M1139.5,10V508M1140.5,10V555M1141.5,20V555M1142.5,5V528M1143.5,5V543M1144.5,16V563M1145.5,36V563M1146.5,8V556M1147.5,8V556M1148.5,15V561M1149.5,10V561M1150.5,10V566M1151.5,17V566M1152.5,23V559M1153.5,48V559M1154.5,67V527M1155.5,5V565M1156.5,5V565M1157.5,7V542M1158.5,1V536M1159.5,1V530M1160.5,12V568M1161.5,32V568M1162.5,34V550M1163.5,4V557M1164.5,4V557M1165.5,10V557M1166.5,6V561M1167.5,6V561M1168.5,15V556M1169.5,15V557M1170.5,43V563M1171.5,66V563M1172.5,32V528M1173.5,32V566M1174.5,38V566M1175.5,52V558M1176.5,53V558M1177.5,52V564M1178.5,11V564M1179.5,10V549M1180.5,10V514M1181.5,3V503M1182.5,3V538M1183.5,15V563M1184.5,29V563M1185.5,35V547M1186.5,35V563M1187.5,35V563M1188.5,88V545M1189.5,9V559M1190.5,9V559M1191.5,19V522M1192.5,9V520M1193.5,9V526M1194.5,27V563M1195.5,27V563M1196.5,61V547M1197.5,61V539M1198.5,10V541M1199.5,10V541M1200.5,10V523M1201.5,29V562M1202.5,5V562M1203.5,5V533M1204.5,13V541M1205.5,13V541M1206.5,41V564M1207.5,37V564M1208.5,29V564M1209.5,29V513M1210.5,19V546M1211.5,15V546M1212.5,15V522M1213.5,10V522M1214.5,10V540M1215.5,1V540M1216.5,1V546M1217.5,25V557M1218.5,30V557M1219.5,29V550M1220.5,29V547M1221.5,49V553M1222.5,32V566M1223.5,18V566M1224.5,18V562M1225.5,11V555M1226.5,11V549M1227.5,2V529M1228.5,2V529M1229.5,54V553M1230.5,54V553M1231.5,4V524M1232.5,4V560M1233.5,32V560M1234.5,32V560M1235.5,13V560M1236.5,13V567M1237.5,30V567M1238.5,35V566M1239.5,5V535M1240.5,5V564M1241.5,56V564M1242.5,18V563M1243.5,5V563M1244.5,5V566M1245.5,14V566M1246.5,14V536M1247.5,32V514M1248.5,32V511M1249.5,11V511M1250.5,8V564M1251.5,8V564M1252.5,21V549M1253.5,13V565M1254.5,13V565M1255.5,26V549M1256.5,26V549M1257.5,5V535M1258.5,5V516M1259.5,15V516M1260.5,2V535M1261.5,2V544M1262.5,52V544M1263.5,2V539M1264.5,2V547M1265.5,35V547M1266.5,23V536M1267.5,23V536M1268.5,7V566M1269.5,7V566M1270.5,62V550M1271.5,62V550M1272.5,64V547M1273.5,81V533M1274.5,11V533M1275.5,11V522M1276.5,3V522M1277.5,3V548M1278.5,20V548M1279.5,25V496M1280.5,25V558M1281.5,22V558M1282.5,6V551M1283.5,6V551M1284.5,7V540M1285.5,35V549M1286.5,93V549M1287.5,9V553M1288.5,9V553M1289.5,15V530M1290.5,15V532M1291.5,23V542M1292.5,23V545M1293.5,49V545M1294.5,25V528M1295.5,6V561M1296.5,6V561M1297.5,10V567M1298.5,10V567M1299.5,28V513M1300.5,28V536M1301.5,34V560M1302.5,34V560M1303.5,15V567M1304.5,15V567M1305.5,19V558M1306.5,19V565M1307.5,9V565M1308.5,9V555M1309.5,22V555M1310.5,20V545M1311.5,13V567M1312.5,13V567M1313.5,31V551M1314.5,11V551M1315.5,11V538M1316.5,13V538M1317.5,2V535M1318.5,2V550M1319.5,18V550M1320.5,18V540M1321.5,2V540M1322.5,2V528M1323.5,6V528M1324.5,1V543M1325.5,1V543M1326.5,20V505M1327.5,20V525M1328.5,56V566M1329.5,50V566M1330.5,12V566M1331.5,1V567M1332.5,1V567M1333.5,13V566M1334.5,25V566M1335.5,17V566M1336.5,1V566M1337.5,1V523M1338.5,9V523M1339.5,9V548M1340.5,17V554M1341.5,17V554M1342.5,89V524M1343.5,5V568M1344.5,5V568M1345.5,79V516M1346.5,8V503M1347.5,8V526M1348.5,83V559M1349.5,12V559M1350.5,12V561M1351.5,3V561M1352.5,2V537M1353.5,2V566M1354.5,14V566M1355.5,7V543M1356.5,7V543M1357.5,13V556M1358.5,13V556M1359.5,34V555M1360.5,12V555M1361.5,12V555M1362.5,18V528M1363.5,8V522M1364.5,8V522M1365.5,8V529M1366.5,8V529M1367.5,53V531M1368.5,60V557M1369.5,70V557M1370.5,31V552M1371.5,31V552M1372.5,44V535M1373.5,16V556M1374.5,16V556M1375.5,10V552M1376.5,10V563M1377.5,46V563M1378.5,27V524M1379.5,27V558M1380.5,18V558M1381.5,18V559M1382.5,16V559M1383.5,5V521M1384.5,5V508M1385.5,31V546M1386.5,16V546M1387.5,16V544M1388.5,36V555M1389.5,36V555M1390.5,8V510M1391.5,8V540M1392.5,21V540M1393.5,35V533M1394.5,24V530M1395.5,24V530M1396.5,56V527M1397.5,33V567M1398.5,6V567M1399.5,6V549M1400.5,6V549M1401.5,5V541M1402.5,5V541M1403.5,9V538M1404.5,9V554M1405.5,11V554M1406.5,11V535M1407.5,8V476M1408.5,8V532M1409.5,12V533M1410.5,5V533M1411.5,3V558M1412.5,3V567M1413.5,9V567M1414.5,25V559M1415.5,54V553M1416.5,45V553M1417.5,36V550M1418.5,14V556M1419.5,14V556M1420.5,15V555M1421.5,15V552M1422.5,15V554M1423.5,4V554M1424.5,4V564M1425.5,18V564M1426.5,23V561M1427.5,19V561M1428.5,19V520M1429.5,5V566M1430.5,5V566M1431.5,12V562M1432.5,3V514M1433.5,3V514M1434.5,26V537M1435.5,36V537M1436.5,11V525M1437.5,11V525M1438.5,6V512M1439.5,6V511M1440.5,18V524M1441.5,18V555M1442.5,3V555M1443.5,3V560M1444.5,4V560M1445.5,4V559M1446.5,9V559M1447.5,2V557M1448.5,2V566M1449.5,27V566M1450.5,27V536M1451.5,62V559M1452.5,58V561M1453.5,33V561M1454.5,33V561M1455.5,30V545M1456.5,19V463M1457.5,19V556M1458.5,4V556M1459.5,4V561M1460.5,14V561M1461.5,14V517M1462.5,31V513M1463.5,31V550M1464.5,9V550M1465.5,4V537M1466.5,4V565M1467.5,30V565M1468.5,35V525M1469.5,15V552M1470.5,15V563M1471.5,2V564M1472.5,2V567M1473.5,31V567M1474.5,22V549M1475.5,16V549M1476.5,16V473M1477.5,8V555M1478.5,8V555M1479.5,18V553M1480.5,18V563M1481.5,25V563M1482.5,6V550M1483.5,6V560M1484.5,56V560M1485.5,9V561M1486.5,9V561M1487.5,121V558M1488.5,13V546M1489.5,5V516M1490.5,5V535M1491.5,19V535M1492.5,36V563M1493.5,50V563M1494.5,50V563M1495.5,77V563M1496.5,49V513M1497.5,6V546M1498.5,6V546M1499.5,10V568M1500.5,2V568M1501.5,2V549M1502.5,3V529M1503.5,3V529M1504.5,28V553M1505.5,19V553M1506.5,19V532M1507.5,52V554M1508.5,52V558M1509.5,81V558M1510.5,11V549M1511.5,11V536M1512.5,18V514M1513.5,18V561M1514.5,23V561M1515.5,30V557M1516.5,30V561M1517.5,51V565M1518.5,8V566M1519.5,8V566M1520.5,12V561M1521.5,14V561M1522.5,3V555M1523.5,3V532M1524.5,18V532M1525.5,18V545M1526.5,15V545M1527.5,15V557M1528.5,41V557M1529.5,68V530M1530.5,72V530M1531.5,2V547M1532.5,2V547M1533.5,11V545M1534.5,2V563M1535.5,2V563M1536.5,71V555M1537.5,2V559M1538.5,2V559M1539.5,22V547M1540.5,28V547M1541.5,16V453M1542.5,7V484M1543.5,6V558M1544.5,4V558M1545.5,4V561M1546.5,30V561M1547.5,14V544M1548.5,14V549M1549.5,17V549M1550.5,17V534M1551.5,24V534M1552.5,9V556M1553.5,9V556M1554.5,5V509M1555.5,5V531M1556.5,22V540M1557.5,10V549M1558.5,2V557M1559.5,2V557M1560.5,26V548M1561.5,13V541M1562.5,13V542M1563.5,66V567M1564.5,63V567M1565.5,48V550M1566.5,48V567M1567.5,14V567M1568.5,14V564M1569.5,5V564M1570.5,5V551M1571.5,86V551M1572.5,45V559M1573.5,45V562M1574.5,23V562M1575.5,5V534M1576.5,4V509M1577.5,4V551M1578.5,5V551M1579.5,14V564M1580.5,14V564M1581.5,22V564M1582.5,11V544M1583.5,11V533M1584.5,73V533M1585.5,50V559M1586.5,50V559M1587.5,18V565M1588.5,13V565M1589.5,9V549M1590.5,9V551M1591.5,9V551M1592.5,9V566M1593.5,13V566M1594.5,13V541M1595.5,70V541M1596.5,43V544M1597.5,36V545M1598.5,36V545M1599.5,59V544M1600.5,9V563M1601.5,9V565M1602.5,34V565M1603.5,34V511M1604.5,42V536M1605.5,56V567M1606.5,22V567M1607.5,22V565M1608.5,27V565M1609.5,34V558M1610.5,2V552M1611.5,2V552M1612.5,65V525M1613.5,17V533M1614.5,17V560M1615.5,43V560M1616.5,43V476M1617.5,24V563M1618.5,24V567M1619.5,6V567M1620.5,6V514M1621.5,39V551M1622.5,7V564M1623.5,7V564M1624.5,22V560M1625.5,22V567M1626.5,40V567M1627.5,7V565M1628.5,7V565M1629.5,46V567M1630.5,46V567M1631.5,27V527M1632.5,27V527M1633.5,10V514M1634.5,10V555M1635.5,133V555M1636.5,22V534M1637.5,22V566M1638.5,39V566M1639.5,39V541M1640.5,42V555M1641.5,44V565M1642.5,14V565M1643.5,14V560M1644.5,9V547M1645.5,2V550M1646.5,2V550M1647.5,41V546M1648.5,41V539M1649.5,15V517M1650.5,15V527M1651.5,27V541M1652.5,11V564M1653.5,11V564M1654.5,39V537M1655.5,20V542M1656.5,16V542M1657.5,16V531M1658.5,10V535M1659.5,10V567M1660.5,39V567M1661.5,6V568M1662.5,6V568M1663.5,10V537M1664.5,10V555M1665.5,3V555M1666.5,3V512M1667.5,10V512M1668.5,138V539M1669.5,54V539M1670.5,26V561M1671.5,7V561M1672.5,7V438M1673.5,26V567M1674.5,5V567M1675.5,5V565M1676.5,32V565M1677.5,11V558M1678.5,11V493M1679.5,10V420M1680.5,4V492M1681.5,4V556M1682.5,16V568M1683.5,12V568M1684.5,12V537M1685.5,12V521M1686.5,12V524M1687.5,12V524M1688.5,26V535M1689.5,18V535M1690.5,18V528M1691.5,35V508M1692.5,78V546M1693.5,21V546M1694.5,21V543M1695.5,9V543M1696.5,9V532M1697.5,8V562M1698.5,8V563M1699.5,20V563M1700.5,5V550M1701.5,5V502M1702.5,10V539M1703.5,25V563M1704.5,23V563M1705.5,14V558M1706.5,14V558M1707.5,33V565M1708.5,7V565M1709.5,7V554M1710.5,3V554M1711.5,3V553M1712.5,8V556M1713.5,8V556M1714.5,7V553M1715.5,7V544M1716.5,7V544M1717.5,4V544M1718.5,4V557M1719.5,67V557M1720.5,69V552M1721.5,2V552M1722.5,2V536M1723.5,15V558M1724.5,14V558M1725.5,14V565M1726.5,10V565M1727.5,10V481M1728.5,6V520M1729.5,6V520M1730.5,11V515M1731.5,11V515M1732.5,18V560M1733.5,18V560M1734.5,2V563M1735.5,2V563M1736.5,5V550M1737.5,5V549M1738.5,7V542M1739.5,7V521M1740.5,25V564M1741.5,25V564M1742.5,2V549M1743.5,2V526M1744.5,45V559M1745.5,36V565M1746.5,22V565M1747.5,9V541M1748.5,9V555M1749.5,10V555M1750.5,10V533M1751.5,18V521M1752.5,4V555M1753.5,4V555M1754.5,54V565M1755.5,16V565M1756.5,16V559M1757.5,21V549M1758.5,21V539M1759.5,29V545M1760.5,26V545M1761.5,6V558M1762.5,6V562M1763.5,30V562M1764.5,14V558M1765.5,5V558M1766.5,5V517M1767.5,14V560M1768.5,25V560M1769.5,25V542M1770.5,22V542M1771.5,22V559M1772.5,52V559M1773.5,22V561M1774.5,8V561M1775.5,8V531M1776.5,4V536M1777.5,4V536M1778.5,21V531M1779.5,21V549M1780.5,29V549M1781.5,26V546M1782.5,26V567M1783.5,15V567M1784.5,15V534M1785.5,13V542M1786.5,13V563M1787.5,28V563M1788.5,123V551M1789.5,30V551M1790.5,30V559M1791.5,91V559M1792.5,95V550M1793.5,7V563M1794.5,7V563M1795.5,17V565M1796.5,25V565M1797.5,18V549M1798.5,18V536M1799.5,7V553M1800.5,7V553M1801.5,11V561M1802.5,11V565M1803.5,6V565M1804.5,6V559M1805.5,26V553M1806.5,18V518M1807.5,8V560M1808.5,8V560M1809.5,8V504M1810.5,8V549M1811.5,37V549M1812.5,30V538M1813.5,18V538M1814.5,18V519M1815.5,21V484M1816.5,32V556M1817.5,38V559M1818.5,12V565M1819.5,12V565M1820.5,13V566M1821.5,4V566M1822.5,4V534M1823.5,19V563M1824.5,12V563M1825.5,12V565M1826.5,28V565M1827.5,28V532M1828.5,118V538M1829.5,17V538M1830.5,17V563M1831.5,38V563M1832.5,64V562M1833.5,54V531M1834.5,54V563M1835.5,1V563M1836.5,1V551M1837.5,11V553M1838.5,7V553M1839.5,7V550M1840.5,9V547M1841.5,9V524M1842.5,14V535M1843.5,60V543M1844.5,86V543M1845.5,57V536M1846.5,15V542M1847.5,6V542M1848.5,1V512M1849.5,1V512M1850.5,6V541M1851.5,6V565M1852.5,7V567M1853.5,3V567M1854.5,3V516M1855.5,24V528M1856.5,6V567M1857.5,6V567M1858.5,18V537M1859.5,18V522M1860.5,12V567M1861.5,12V567M1862.5,19V540M1863.5,37V503M1864.5,37V564M1865.5,37V564M1866.5,30V558M1867.5,12V558M1868.5,12V558M1869.5,4V507M1870.5,4V539M1871.5,6V539M1872.5,21V552M1873.5,24V562M1874.5,41V562M1875.5,21V550M1876.5,15V552M1877.5,13V552M1878.5,7V538M1879.5,7V559M1880.5,11V559M1881.5,1V537M1882.5,1V525M1883.5,9V568M1884.5,9V568M1885.5,17V539M1886.5,5V541M1887.5,5V564M1888.5,30V564M1889.5,30V548M1890.5,50V553M1891.5,12V553M1892.5,12V565M1893.5,67V565M1894.5,66V542M1895.5,8V562M1896.5,8V562M1897.5,30V550M1898.5,14V550M1899.5,14V545M1900.5,5V533M1901.5,5V547M1902.5,70V564M1903.5,49V564M1904.5,5V542M1905.5,5V535M1906.5,15V548M1907.5,21V548M1908.5,4V561M1909.5,4V561M1910.5,61V564M1911.5,5V564M1912.5,5V561M1913.5,18V561M1914.5,24V553M1915.5,9V553M1916.5,6V556M1917.5,6V556M1918.5,29V547M1919.5,21V541M1920.5,21V543M1921.5,14V558M1922.5,14V558M1923.5,104V556M1924.5,73V556M1925.5,4V553M1926.5,4V553M1927.5,7V552M1928.5,7V552M1929.5,8V556M1930.5,8V556M1931.5,2V533M1932.5,2V550M1933.5,96V550M1934.5,25V541M1935.5,11V518M1936.5,11V518M1937.5,8V540M1938.5,8V553M1939.5,24V553M1940.5,21V516M1941.5,20V563M1942.5,14V564M1943.5,14V564M1944.5,23V567M1945.5,23V567M1946.5,3V559M1947.5,3V559M1948.5,6V555M1949.5,6V546M1950.5,14V561M1951.5,14V561M1952.5,12V559M1953.5,12V533M1954.5,14V533M1955.5,20V555M1956.5,15V555M1957.5,15V539M1958.5,30V539M1959.5,9V565M1960.5,4V565M1961.5,4V560M1962.5,23V541M1963.5,17V555M1964.5,17V555M1965.5,27V533M1966.5,50V533M1967.5,43V538M1968.5,43V538M1969.5,10V550M1970.5,7V550M1971.5,7V540M1972.5,16V537M1973.5,10V537M1974.5,10V522M1975.5,58V551M1976.5,26V551M1977.5,26V557M1978.5,28V557M1979.5,21V563M1980.5,21V563M1981.5,27V560M1982.5,43V543M1983.5,13V537M1984.5,13V537M1985.5,29V533M1986.5,13V542M1987.5,13V551M1988.5,10V551M1989.5,10V564M1990.5,2V567M1991.5,2V567M1992.5,3V562M1993.5,17V551M1994.5,17V551M1995.5,68V557M1996.5,117V565M1997.5,27V565M1998.5,27V543M1999.5,26V550M2000.5,26V555M2001.5,4V555M2002.5,4V554M2003.5,17V449M2004.5,28V527M2005.5,28V553M2006.5,14V555M2007.5,14V555M2008.5,1V566M2009.5,1V566M2010.5,23V546M2011.5,23V559M2012.5,34V559M2013.5,34V558M2014.5,33V548M2015.5,33V533M2016.5,28V533M2017.5,28V567M2018.5,37V567M2019.5,18V515M2020.5,18V557M2021.5,85V557M2022.5,12V526M2023.5,12V552M2024.5,16V564M2025.5,16V566M2026.5,29V566M2027.5,49V564M2028.5,11V555M2029.5,11V555M2030.5,15V552M2031.5,15V552M2032.5,27V547M2033.5,33V561M2034.5,1V561M2035.5,1V548M2036.5,5V563M2037.5,38V564M2038.5,4V564M2039.5,3V563M2040.5,3V563M2041.5,11V556M2042.5,46V551M2043.5,40V551M2044.5,35V544M2045.5,35V544M2046.5,44V565M2047.5,44V565M2048.5,14V555M2049.5,14V526M2050.5,18V531M2051.5,28V554M2052.5,16V566M2053.5,7V566M2054.5,7V559M2055.5,13V562M2056.5,13V562M2057.5,5V515M2058.5,5V511M2059.5,1V562M2060.5,1V562M2061.5,4V524M2062.5,9V561M2063.5,15V561M2064.5,37V528M2065.5,46V540M2066.5,5V540M2067.5,5V524M2068.5,13V524M2069.5,10V535M2070.5,10V547M2071.5,19V553M2072.5,11V564M2073.5,11V564M2074.5,46V564M2075.5,43V546M2076.5,35V555M2077.5,35V555M2078.5,38V562M2079.5,3V562M2080.5,3V534M2081.5,12V550M2082.5,8V551M2083.5,2V551M2084.5,2V553M2085.5,30V553M2086.5,30V546M2087.5,23V546M2088.5,9V558M2089.5,9V558M2090.5,45V545M2091.5,11V566M2092.5,11V566M2093.5,12V527M2094.5,12V566M2095.5,21V566M2096.5,20V566M2097.5,20V522M2098.5,25V522M2099.5,12V564M2100.5,12V564M2101.5,23V554M2102.5,23V561M2103.5,64V561M2104.5,64V558M2105.5,6V558M2106.5,6V533M2107.5,11V565M2108.5,11V565M2109.5,51V559M2110.5,78V555M2111.5,1V546M2112.5,1V558M2113.5,6V558M2114.5,7V563M2115.5,18V563M2116.5,16V561M2117.5,4V538M2118.5,4V546M2119.5,17V546M2120.5,17V540M2121.5,32V540M2122.5,11V534M2123.5,11V525M2124.5,1V540M2125.5,1V565M2126.5,18V565M2127.5,18V539M2128.5,58V537M2129.5,48V537M2130.5,4V559M2131.5,1V559M2132.5,1V550M2133.5,46V550M2134.5,17V557M2135.5,17V557M2136.5,19V554M2137.5,2V520M2138.5,2V529M2139.5,57V556M2140.5,91V556M2141.5,17V520M2142.5,17V555M2143.5,10V555M2144.5,10V555M2145.5,15V555M2146.5,15V554M2147.5,1V566M2148.5,1V566M2149.5,4V555M2150.5,4V537M2151.5,17V567M2152.5,17V567M2153.5,41V555M2154.5,20V546M2155.5,20V561M2156.5,26V561M2157.5,26V520M2158.5,13V536M2159.5,13V536M2160.5,9V547M2161.5,9V547M2162.5,41V559M2163.5,41V559M2164.5,45V552M2165.5,50V561M2166.5,46V561M2167.5,5V544M2168.5,5V566M2169.5,34V566M2170.5,34V568M2171.5,16V568M2172.5,16V567M2173.5,44V567M2174.5,14V564M2175.5,11V559M2176.5,11V563M2177.5,50V563M2178.5,58V548M2179.5,6V548M2180.5,6V531M2181.5,22V546M2182.5,22V546M2183.5,22V522M2184.5,26V540M2185.5,26V540M2186.5,39V555M2187.5,8V555M2188.5,8V559M2189.5,2V559M2190.5,2V556M2191.5,29V556M2192.5,4V550M2193.5,4V540M2194.5,6V561M2195.5,5V561M2196.5,5V567M2197.5,11V567M2198.5,11V560M2199.5,21V547M2200.5,2V547M2201.5,2V560M2202.5,27V560M2203.5,42V546M2204.5,45V556M2205.5,31V556M2206.5,31V518M2207.5,36V551M2208.5,7V551M2209.5,7V496M2210.5,3V559M2211.5,3V559M2212.5,59V564M2213.5,38V564M2214.5,38V551M2215.5,48V545M2216.5,57V545M2217.5,60V539M2218.5,60V567M2219.5,27V567M2220.5,19V559M2221.5,4V559M2222.5,4V544M2223.5,7V560M2224.5,7V560M2225.5,27V567M2226.5,20V567M2227.5,20V560M2228.5,31V533M2229.5,31V533M2230.5,21V566M2231.5,12V566M2232.5,12V560M2233.5,37V561M2234.5,37V561M2235.5,5V543M2236.5,5V437M2237.5,19V561M2238.5,19V561M2239.5,20V553M2240.5,20V511M2241.5,35V545M2242.5,29V567M2243.5,29V567M2244.5,52V567M2245.5,14V567M2246.5,14V536M2247.5,5V536M2248.5,5V555M2249.5,22V555M2250.5,22V549M2251.5,22V549M2252.5,5V545M2253.5,5V545M2254.5,23V563M2255.5,23V563M2256.5,46V555M2257.5,20V555M2258.5,20V515M2259.5,27V521M2260.5,27V558M2261.5,4V558M2262.5,4V566M2263.5,19V566M2264.5,7V555M2265.5,7V480M2266.5,23V514M2267.5,8V514M2268.5,7V544M2269.5,7V544M2270.5,4V537M2271.5,4V539M2272.5,52V553M2273.5,47V553M2274.5,47V566M2275.5,48V566M2276.5,10V567M2277.5,4V567M2278.5,4V527M2279.5,5V525M2280.5,5V525M2281.5,65V548M2282.5,43V548M2283.5,43V546M2284.5,5V533M2285.5,5V552M2286.5,26V556M2287.5,26V556M2288.5,23V514M2289.5,14V530M2290.5,4V547M2291.5,4V550M2292.5,16V550M2293.5,44V520M2294.5,5V547M2295.5,4V553M2296.5,4V553M2297.5,16V535M2298.5,31V535M2299.5,18V545M2300.5,18V545M2301.5,38V537M2302.5,20V566M2303.5,20V566M2304.5,22V512M2305.5,35V547M2306.5,34V553M2307.5,27V553M2308.5,27V535M2309.5,2V541M2310.5,2V556M2311.5,20V564M2312.5,20V564M2313.5,21V496M2314.5,73V507M2315.5,18V551M2316.5,18V551M2317.5,45V567M2318.5,11V567M2319.5,11V566M2320.5,52V566M2321.5,4V552M2322.5,4V552M2323.5,9V503M2324.5,9V552M2325.5,24V552M2326.5,20V549M2327.5,20V567M2328.5,27V567M2329.5,63V562M2330.5,79V560M2331.5,9V560M2332.5,9V560M2333.5,17V550M2334.5,80V560M2335.5,6V560M2336.5,6V552M2337.5,15V565M2338.5,33V565M2339.5,33V559M2340.5,71V556M2341.5,62V559M2342.5,16V559M2343.5,14V535M2344.5,14V561M2345.5,62V561M2346.5,29V554M2347.5,29V557M2348.5,44V557M2349.5,36V556M2350.5,23V556M2351.5,23V541M2352.5,31V565M2353.5,2V565M2354.5,2V566M2355.5,6V566M2356.5,7V529M2357.5,3V529M2358.5,3V562M2359.5,5V562M2360.5,24V558M2361.5,15V551M2362.5,15V548M2363.5,26V565M2364.5,66V565M2365.5,55V558M2366.5,9V552M2367.5,4V564M2368.5,4V564M2369.5,15V564M2370.5,15V564M2371.5,60V542M2372.5,5V542M2373.5,5V566M2374.5,20V566M2375.5,20V532M2376.5,28V486M2377.5,56V501M2378.5,9V539M2379.5,9V541M2380.5,90V552M2381.5,90V552M2382.5,27V514M2383.5,1V567M2384.5,1V567M2385.5,13V540M2386.5,21V565M2387.5,21V565M2388.5,2V498M2389.5,2V554M2390.5,31V554M2391.5,25V558M2392.5,3V558M2393.5,3V552M2394.5,13V561M2395.5,84V561M2396.5,5V549M2397.5,5V549M2398.5,39V568M2399.5,9V568M2400.5,9V509M2401.5,9V561M2402.5,21V561M2403.5,18V552M2404.5,18V555M2405.5,32V559M2406.5,5V559M2407.5,5V552M2408.5,8V525M2409.5,11V567M2410.5,11V567M2411.5,35V561M2412.5,16V538M2413.5,16V534M2414.5,25V550M2415.5,19V550M2416.5,19V549M2417.5,4V531M2418.5,4V562M2419.5,13V562M2420.5,13V538M2421.5,27V538M2422.5,31V562M2423.5,31V562M2424.5,39V552M2425.5,4V543M2426.5,4V543M2427.5,21V554M2428.5,8V554M2429.5,8V565M2430.5,46V565M2431.5,1V559M2432.5,1V459M2433.5,17V535M2434.5,1V535M2435.5,1V563M2436.5,6V563M2437.5,6V564M2438.5,6V564M2439.5,6V567M2440.5,27V567M2441.5,79V566M2442.5,12V564M2443.5,2V561M2444.5,2V549M2445.5,19V549M2446.5,19V518M2447.5,4V554M2448.5,4V554M2449.5,10V553M2450.5,33V562M2451.5,7V564M2452.5,7V564M2453.5,48V555M2454.5,14V542M2455.5,14V537M2456.5,55V527M2457.5,9V527M2458.5,9V495M2459.5,6V554M2460.5,6V554M2461.5,34V558M2462.5,14V558M2463.5,14V546M2464.5,26V498M2465.5,6V566M2466.5,6V566M2467.5,12V544M2468.5,12V559M2469.5,10V559M2470.5,5V532M2471.5,5V557M2472.5,41V560M2473.5,43V560M2474.5,23V557M2475.5,5V557M2476.5,5V548M2477.5,17V520M2478.5,17V534M2479.5,23V534M2480.5,24V550M2481.5,63V563M2482.5,25V563M2483.5,25V533M2484.5,13V533M2485.5,11V533M2486.5,11V537M2487.5,13V537M2488.5,22V560M2489.5,12V560M2490.5,12V541M2491.5,24V541M2492.5,24V551M2493.5,3V551M2494.5,3V545M2495.5,6V495M2496.5,6V534M2497.5,14V561M2498.5,2V561M2499.5,2V562M2500.5,21V562M2501.5,21V555M2502.5,10V552M2503.5,10V567M2504.5,28V567M2505.5,27V516M2506.5,18V523M2507.5,18V540M2508.5,29V540M2509.5,29V551M2510.5,42V551M2511.5,38V536M2512.5,38V519M2513.5,39V521M2514.5,10V547M2515.5,3V547M2516.5,3V557M2517.5,47V557M2518.5,21V566M2519.5,2V566M2520.5,2V556M2521.5,10V556M2522.5,20V518M2523.5,20V555M2524.5,21V562M2525.5,7V562M2526.5,7V540M2527.5,3V521M2528.5,3V521M2529.5,15V560M2530.5,35V560M2531.5,16V545M2532.5,16V545M2533.5,25V555M2534.5,25V555M2535.5,2V553M2536.5,2V553M2537.5,20V558M2538.5,20V558M2539.5,23V565M2540.5,23V565M2541.5,3V546M2542.5,3V528M2543.5,22V539M2544.5,3V539M2545.5,3V550M2546.5,36V557M2547.5,20V557M2548.5,20V555M2549.5,39V567M2550.5,20V567M2551.5,3V564M2552.5,3V564M2553.5,8V552M2554.5,54V527M2555.5,7V566M2556.5,7V566M2557.5,12V543M2558.5,4V531M2559.5,4V531M2560.5,28V567M2561.5,70V567M2562.5,35V560M2563.5,14V541M2564.5,6V561M2565.5,6V561M2566.5,8V525M2567.5,8V566M2568.5,79V566M2569.5,14V544M2570.5,14V565M2571.5,26V565M2572.5,26V538M2573.5,70V560M2574.5,28V560M2575.5,28V562M2576.5,20V562M2577.5,20V536M2578.5,17V533M2579.5,6V561M2580.5,6V561M2581.5,13V506M2582.5,13V544M2583.5,7V550M2584.5,7V550M2585.5,7V562M2586.5,7V562M2587.5,8V545M2588.5,13V529M2589.5,13V564M2590.5,19V564M2591.5,4V558M2592.5,4V552M2593.5,33V557M2594.5,33V561M2595.5,12V561M2596.5,6V531M2597.5,6V557M2598.5,14V557M2599.5,30V556M2600.5,30V564M2601.5,11V564M2602.5,11V546M2603.5,3V544M2604.5,3V531M2605.5,17V555M2606.5,4V555M2607.5,4V512M2608.5,29V550M2609.5,22V550M2610.5,22V559M2611.5,5V559M2612.5,5V515M2613.5,18V557M2614.5,18V561M2615.5,82V561M2616.5,45V525M2617.5,6V546M2618.5,6V546M2619.5,31V556M2620.5,31V556M2621.5,49V566M2622.5,6V566M2623.5,6V560M2624.5,49V534M2625.5,25V561M2626.5,15V561M2627.5,15V522M2628.5,10V565M2629.5,10V565M2630.5,36V533M2631.5,3V547M2632.5,3V565M2633.5,65V565M2634.5,69V543M2635.5,8V557M2636.5,6V561M2637.5,6V561M2638.5,14V536M2639.5,17V508M2640.5,17V539M2641.5,34V539M2642.5,23V535M2643.5,23V559M2644.5,2V559M2645.5,2V538M2646.5,14V567M2647.5,18V567M2648.5,18V562M2649.5,31V562M2650.5,26V545M2651.5,15V545M2652.5,15V535M2653.5,14V533M2654.5,14V533M2655.5,18V539M2656.5,26V566M2657.5,26V566M2658.5,32V560M2659.5,27V544M2660.5,11V525M2661.5,11V497M2662.5,17V566M2663.5,17V566M2664.5,24V563M2665.5,55V560M2666.5,2V544M2667.5,2V544M2668.5,5V552M2669.5,5V552M2670.5,45V559M2671.5,14V559M2672.5,14V535M2673.5,4V548M2674.5,4V551M2675.5,12V551M2676.5,12V562M2677.5,44V562M2678.5,44V524M2679.5,49V533M2680.5,16V533M2681.5,16V556M2682.5,8V556M2683.5,8V555M2684.5,14V555M2685.5,36V536M2686.5,6V563M2687.5,6V563M2688.5,34V526M2689.5,13V544M2690.5,13V548M2691.5,84V548M2692.5,117V553M2693.5,21V562M2694.5,21V562M2695.5,46V549M2696.5,7V563M2697.5,7V563M2698.5,35V555M2699.5,12V483M2700.5,12V483M2701.5,50V521M2702.5,40V521M2703.5,28V528M2704.5,14V528M2705.5,14V557M2706.5,33V563M2707.5,39V565M2708.5,65V565M2709.5,15V565M2710.5,15V554M2711.5,40V547M2712.5,20V547M2713.5,4V528M2714.5,4V528M2715.5,20V524M2716.5,14V524M2717.5,14V560M2718.5,31V560M2719.5,31V557M2720.5,25V557M2721.5,9V551M2722.5,9V556M2723.5,20V556M2724.5,20V558M2725.5,70V558M2726.5,80V556M2727.5,23V556M2728.5,8V549M2729.5,8V487M2730.5,3V529M2731.5,3V533M2732.5,4V533M2733.5,23V521M2734.5,26V568M2735.5,5V568M2736.5,5V566M2737.5,12V566M2738.5,12V552M2739.5,2V565M2740.5,2V565M2741.5,4V543M2742.5,36V504M2743.5,65V562M2744.5,46V562M2745.5,27V567M2746.5,8V567M2747.5,8V546M2748.5,8V546M2749.5,25V541M2750.5,12V550M2751.5,12V550M2752.5,24V467M2753.5,24V451M2754.5,34V542M2755.5,29V543M2756.5,29V555M2757.5,95V567M2758.5,9V567M2759.5,9V505M2760.5,64V555M2761.5,26V555M2762.5,4V553M2763.5,4V549M2764.5,56V558M2765.5,23V558M2766.5,22V523M2767.5,16V523M2768.5,16V566M2769.5,21V566M2770.5,21V558M2771.5,35V561M2772.5,9V561M2773.5,9V565M2774.5,26V565M2775.5,49V559M2776.5,49V559M2777.5,13V552M2778.5,11V518M2779.5,11V518M2780.5,18V556M2781.5,14V561M2782.5,14V561M2783.5,64V552M2784.5,11V552M2785.5,11V554M2786.5,3V554M2787.5,1V554M2788.5,1V554M2789.5,6V557M2790.5,1V557M2791.5,1V519M2792.5,12V519M2793.5,12V524M2794.5,3V534M2795.5,3V538M2796.5,25V551M2797.5,15V558M2798.5,15V558M2799.5,36V534M2800.5,3V544M2801.5,3V544M2802.5,21V538M2803.5,12V538M2804.5,12V553M2805.5,26V553M2806.5,16V547M2807.5,16V547M2808.5,9V541M2809.5,9V548M2810.5,59V548M2811.5,10V543M2812.5,10V555M2813.5,13V564M2814.5,13V564M2815.5,29V536M2816.5,21V527M2817.5,19V512M2818.5,19V537M2819.5,13V537M2820.5,9V555M2821.5,6V555M2822.5,6V547M2823.5,17V547M2824.5,43V544M2825.5,6V552M2826.5,6V552M2827.5,41V515M2828.5,43V545M2829.5,43V545M2830.5,64V537M2831.5,18V563M2832.5,9V563M2833.5,9V531M2834.5,55V566M2835.5,75V566M2836.5,35V546M2837.5,35V560M2838.5,4V560M2839.5,4V546M2840.5,5V540M2841.5,5V524M2842.5,15V529M2843.5,15V529M2844.5,40V516M2845.5,28V504M2846.5,28V508M2847.5,2V563M2848.5,2V563M2849.5,18V512M2850.5,26V567M2851.5,10V567M2852.5,10V538M2853.5,69V538M2854.5,33V480M2855.5,17V564M2856.5,17V564M2857.5,3V526M2858.5,3V516M2859.5,71V516M2860.5,4V511M2861.5,4V566M2862.5,9V566M2863.5,48V557M2864.5,2V540M2865.5,2V566M2866.5,11V566M2867.5,11V561M2868.5,22V551M2869.5,18V539M2870.5,18V511M2871.5,7V556M2872.5,7V556M2873.5,15V563M2874.5,20V563M2875.5,28V553M2876.5,2V553M2877.5,2V567M2878.5,4V567M2879.5,8V521M2880.5,1V524M2881.5,1V568M2882.5,16V568M2883.5,20V547M2884.5,19V538M2885.5,5V538M2886.5,2V528M2887.5,2V557M2888.5,52V557M2889.5,4V553M2890.5,4V549M2891.5,48V549M2892.5,72V520M2893.5,72V557M2894.5,10V557M2895.5,10V530M2896.5,14V566M2897.5,14V566M2898.5,3V565M2899.5,3V562M2900.5,40V562M2901.5,40V562M2902.5,53V550M2903.5,53V563M2904.5,3V563M2905.5,3V563M2906.5,14V563M2907.5,28V525M2908.5,26V463M2909.5,26V564M2910.5,3V564M2911.5,3V554M2912.5,25V554M2913.5,81V554M2914.5,11V554M2915.5,11V567M2916.5,13V567M2917.5,52V565M2918.5,18V546M2919.5,18V546M2920.5,10V545M2921.5,10V555M2922.5,1V563M2923.5,1V563M2924.5,17V546M2925.5,22V563M2926.5,22V563M2927.5,38V560M2928.5,3V534M2929.5,3V566M2930.5,50V566M2931.5,30V515M2932.5,30V515M2933.5,5V562M2934.5,5V565M2935.5,6V565M2936.5,2V562M2937.5,2V562M2938.5,51V517M2939.5,15V507M2940.5,15V552M2941.5,10V552M2942.5,10V526M2943.5,27V543M2944.5,5V564M2945.5,5V564M2946.5,13V565M2947.5,2V565M2948.5,2V554M2949.5,52V554M2950.5,22V541M2951.5,22V541M2952.5,1V561M2953.5,1V561M2954.5,42V557M2955.5,62V565M2956.5,86V565M2957.5,19V527M2958.5,14V516M2959.5,14V461M2960.5,5V501M2961.5,5V555M2962.5,15V555M2963.5,13V544M2964.5,13V559M2965.5,59V559M2966.5,78V553M2967.5,3V553M2968.5,3V559M2969.5,40V559M2970.5,37V559M2971.5,11V534M2972.5,11V497M2973.5,46V565M2974.5,53V565M2975.5,3V504M2976.5,3V519M2977.5,45V561M2978.5,11V561M2979.5,7V542M2980.5,7V542M2981.5,10V526M2982.5,10V549M2983.5,79V552M2984.5,14V552M2985.5,14V559M2986.5,31V559M2987.5,14V553M2988.5,14V560M2989.5,24V560M2990.5,37V531M2991.5,37V526M2992.5,37V568M2993.5,50V568M2994.5,25V559M2995.5,25V545M2996.5,8V545M2997.5,8V512M2998.5,10V549M2999.5,49V549M3000.5,48V541M3001.5,48V555M3002.5,49V564M3003.5,49V566M3004.5,19V566M3005.5,15V537M3006.5,15V567M3007.5,25V567M3008.5,25V548M3009.5,8V566M3010.5,8V566M3011.5,35V557M3012.5,9V535M3013.5,8V566M3014.5,7V566M3015.5,7V539M3016.5,11V539M3017.5,11V551M3018.5,1V551M3019.5,1V542M3020.5,7V505M3021.5,20V505M3022.5,9V499M3023.5,8V519M3024.5,8V534M3025.5,15V564M3026.5,3V564M3027.5,3V552M3028.5,39V564M3029.5,39V564M3030.5,30V529M3031.5,30V546M3032.5,15V546M3033.5,15V540M3034.5,18V551M3035.5,17V551M3036.5,17V540M3037.5,39V547M3038.5,39V547M3039.5,3V537M3040.5,3V558M3041.5,13V558M3042.5,10V539M3043.5,10V539M3044.5,48V521M3045.5,14V546M3046.5,3V559M3047.5,3V559M3048.5,2V561M3049.5,2V561M3050.5,22V559M3051.5,14V510M3052.5,12V545M3053.5,12V545M3054.5,12V513M3055.5,14V517M3056.5,14V553M3057.5,14V553M3058.5,17V566M3059.5,16V566M3060.5,16V501M3061.5,12V567M3062.5,12V567M3063.5,27V564M3064.5,13V533M3065.5,13V557M3066.5,4V557M3067.5,4V544M3068.5,20V564M3069.5,13V564M3070.5,13V514M3071.5,21V531M3072.5,30V533M3073.5,13V545M3074.5,13V545M3075.5,16V559M3076.5,4V559M3077.5,4V567M3078.5,9V567M3079.5,16V541M3080.5,10V563M3081.5,10V564M3082.5,3V566M3083.5,3V566M3084.5,8V535M3085.5,7V518M3086.5,7V543M3087.5,14V543M3088.5,37V519M3089.5,4V529M3090.5,4V529M3091.5,13V561M3092.5,13V561M3093.5,46V544M3094.5,88V549M3095.5,12V552M3096.5,12V552M3097.5,74V526M3098.5,38V526M3099.5,25V565M3100.5,11V565M3101.5,11V514M3102.5,25V521M3103.5,13V539M3104.5,13V539M3105.5,9V554M3106.5,9V554M3107.5,20V546M3108.5,27V562M3109.5,43V562M3110.5,9V540M3111.5,9V515M3112.5,29V554M3113.5,10V554M3114.5,10V526M3115.5,64V554M3116.5,32V554M3117.5,4V539M3118.5,4V558M3119.5,10V563M3120.5,10V563M3121.5,3V553M3122.5,3V553M3123.5,36V525M3124.5,20V536M3125.5,8V537M3126.5,8V537M3127.5,12V534M3128.5,3V567M3129.5,3V567M3130.5,30V558M3131.5,9V558M3132.5,4V548M3133.5,4V527M3134.5,5V545M3135.5,23V545M3136.5,23V559M3137.5,18V561M3138.5,13V561M3139.5,13V501M3140.5,27V562M3141.5,3V562M3142.5,3V542M3143.5,22V542M3144.5,2V543M3145.5,2V543M3146.5,14V531M3147.5,14V531M3148.5,5V558M3149.5,5V561M3150.5,8V561M3151.5,8V525M3152.5,31V561M3153.5,31V561M3154.5,89V564M3155.5,3V564M3156.5,3V562M3157.5,122V562M3158.5,34V490M3159.5,24V552M3160.5,24V568M3161.5,27V568M3162.5,27V542M3163.5,22V551M3164.5,22V551M3165.5,36V545M3166.5,36V525M3167.5,19V531M3168.5,2V548M3169.5,2V548M3170.5,14V544M3171.5,27V544M3172.5,42V551M3173.5,61V551M3174.5,61V532M3175.5,56V544M3176.5,5V548M3177.5,5V562M3178.5,30V562M3179.5,19V567M3180.5,19V567M3181.5,9V563M3182.5,9V547M3183.5,12V547M3184.5,52V540M3185.5,56V563M3186.5,79V563M3187.5,17V561M3188.5,17V564M3189.5,35V564M3190.5,35V496M3191.5,35V547M3192.5,24V547M3193.5,4V546M3194.5,4V558M3195.5,23V558M3196.5,14V558M3197.5,14V567M3198.5,28V567M3199.5,28V554M3200.5,28V549M3201.5,53V549M3202.5,14V526M3203.5,14V543M3204.5,7V543M3205.5,7V552M3206.5,22V552M3207.5,12V555M3208.5,12V555M3209.5,29V528M3210.5,38V522M3211.5,38V494M3212.5,62V538M3213.5,61V538M3214.5,61V522M3215.5,5V532M3216.5,5V532M3217.5,21V550M3218.5,8V567M3219.5,8V567M3220.5,48V514M3221.5,11V520M3222.5,7V549M3223.5,7V549M3224.5,65V555M3225.5,72V555M3226.5,72V529M3227.5,36V562M3228.5,10V562M3229.5,10V557M3230.5,5V557M3231.5,5V511M3232.5,11V546M3233.5,39V546M3234.5,51V537M3235.5,19V537M3236.5,4V530M3237.5,4V548M3238.5,25V568M3239.5,23V568M3240.5,23V542M3241.5,24V563M3242.5,37V563M3243.5,37V554M3244.5,3V557M3245.5,3V557M3246.5,12V461M3247.5,12V564M3248.5,15V564M3249.5,5V558M3250.5,5V558M3251.5,10V538M3252.5,29V545M3253.5,29V565M3254.5,24V565M3255.5,24V557M3256.5,36V557M3257.5,49V522M3258.5,39V528M3259.5,23V558M3260.5,21V558M3261.5,21V560M3262.5,2V560M3263.5,2V524M3264.5,15V496M3265.5,6V496M3266.5,6V548M3267.5,17V565M3268.5,42V565M3269.5,10V553M3270.5,10V553M3271.5,15V522M3272.5,15V546M3273.5,20V546M3274.5,20V531M3275.5,23V531M3276.5,23V550M3277.5,51V563M3278.5,43V563M3279.5,43V535M3280.5,56V549M3281.5,5V559M3282.5,5V568M3283.5,24V568M3284.5,24V531M3285.5,2V517M3286.5,2V546M3287.5,27V546M3288.5,33V560M3289.5,32V560M3290.5,8V521M3291.5,8V521M3292.5,13V548M3293.5,13V559M3294.5,2V559M3295.5,2V557M3296.5,12V557M3297.5,12V555M3298.5,35V538M3299.5,61V564M3300.5,35V564M3301.5,35V557M3302.5,13V527M3303.5,13V551M3304.5,20V553M3305.5,19V553M3306.5,19V545M3307.5,12V545M3308.5,12V560M3309.5,42V568M3310.5,45V568M3311.5,5V568M3312.5,5V524M3313.5,36V529M3314.5,12V529M3315.5,8V542M3316.5,8V542M3317.5,11V548M3318.5,11V548M3319.5,4V563M3320.5,4V563M3321.5,6V564M3322.5,4V564M3323.5,4V529M3324.5,35V532M3325.5,15V532M3326.5,15V562M3327.5,5V562M3328.5,5V542M3329.5,34V563M3330.5,28V563M3331.5,28V515M3332.5,22V555M3333.5,22V555M3334.5,57V562M3335.5,10V562M3336.5,5V559M3337.5,5V559M3338.5,7V521M3339.5,2V521M3340.5,2V564M3341.5,5V564M3342.5,5V564M3343.5,17V550M3344.5,32V550M3345.5,12V488M3346.5,12V565M3347.5,25V567M3348.5,11V567M3349.5,11V560M3350.5,54V560M3351.5,15V559M3352.5,14V510M3353.5,14V548M3354.5,26V568M3355.5,26V568M3356.5,7V552M3357.5,7V565M3358.5,6V565M3359.5,6V542M3360.5,22V558M3361.5,22V564M3362.5,1V564M3363.5,1V540M3364.5,45V550M3365.5,16V550M3366.5,16V530M3367.5,2V560M3368.5,2V560M3369.5,4V556M3370.5,16V513M3371.5,13V544M3372.5,4V544M3373.5,4V520M3374.5,3V565M3375.5,3V565M3376.5,22V549M3377.5,22V553M3378.5,25V565M3379.5,19V565M3380.5,19V555M3381.5,7V526M3382.5,7V563M3383.5,40V563M3384.5,12V525M3385.5,12V520M3386.5,4V538M3387.5,4V553M3388.5,28V565M3389.5,28V565M3390.5,12V505M3391.5,12V545M3392.5,12V551M3393.5,43V553M3394.5,21V553M3395.5,14V553M3396.5,9V512M3397.5,9V526M3398.5,36V563M3399.5,9V563M3400.5,9V542M3401.5,8V564M3402.5,8V564M3403.5,8V564M3404.5,24V545M3405.5,24V545M3406.5,30V528M3407.5,30V528M3408.5,18V501M3409.5,18V562M3410.5,5V562M3411.5,5V532M3412.5,27V552M3413.5,14V552M3414.5,14V546M3415.5,25V498M3416.5,9V544M3417.5,9V544M3418.5,39V550M3419.5,25V550M3420.5,25V546M3421.5,101V551M3422.5,102V551M3423.5,16V508M3424.5,16V508M3425.5,16V495M3426.5,35V495M3427.5,1V565M3428.5,1V565M3429.5,60V553M3430.5,3V562M3431.5,3V562M3432.5,66V554M3433.5,17V549M3434.5,17V549M3435.5,17V566M3436.5,17V566M3437.5,12V552M3438.5,12V513M3439.5,18V562M3440.5,51V562M3441.5,23V550M3442.5,22V558M3443.5,22V562M3444.5,3V562M3445.5,3V564M3446.5,36V564M3447.5,64V529M3448.5,40V541M3449.5,28V541M3450.5,28V554M3451.5,39V568M3452.5,15V568M3453.5,13V473M3454.5,13V475M3455.5,50V533M3456.5,50V556M3457.5,13V556M3458.5,13V522M3459.5,80V498M3460.5,71V546M3461.5,47V546M3462.5,13V539M3463.5,3V533M3464.5,3V545M3465.5,33V545M3466.5,1V548M3467.5,1V548M3468.5,9V556M3469.5,9V566M3470.5,5V566M3471.5,5V551M3472.5,68V553M3473.5,80V553M3474.5,66V547M3475.5,41V547M3476.5,19V545M3477.5,19V567M3478.5,22V567M3479.5,13V552M3480.5,4V535M3481.5,4V487" stroke="#73bf69" stroke-width="1.15" fill="none" shape-rendering="crispEdges"/></svg>
<div class="a " style="left:178px;top:1346px;width:28px;height:8px;background:#73bf69;border-radius:2px;"></div>
<span class="a t" style="left:222.70px;top:1337.86px;font-size:24.5px;line-height:24.5px;color:#ccccdc;letter-spacing:0.022px;-webkit-text-stroke:0.35px #ccccdc;">factoryinsight-testserver-jeremy-energy</span>
<span class="a t" style="left:162.80px;top:1427.59px;font-size:28.6px;line-height:28.6px;color:#ccccdc;letter-spacing:0.062px;-webkit-text-stroke:1.15px #ccccdc;">Table</span>
<div class="a " style="left:146px;top:1490px;width:3600px;height:66px;background:#22252b;"></div>
<span class="a t" style="left:158.10px;top:1509.29px;font-size:28.6px;line-height:28.6px;color:#6e9fff;letter-spacing:0.627px;-webkit-text-stroke:0.35px #6e9fff;">timestamp</span>
<span class="a t" style="left:3229.60px;top:1509.59px;font-size:28.6px;line-height:28.6px;color:#6e9fff;letter-spacing:-0.013px;-webkit-text-stroke:0.35px #6e9fff;">factoryinsight-testserver-jeremy-energy</span>
<div class="a " style="left:1944px;top:1490px;width:2px;height:412px;background:#2c2e33;"></div>
<div class="a " style="left:146px;top:1624px;width:3584px;height:2px;background:#25272c;"></div>
<span class="a t" style="left:157.20px;top:1576.59px;font-size:28.6px;line-height:28.6px;color:#ccccdc;letter-spacing:-0.145px;-webkit-text-stroke:0.35px #ccccdc;">2022-07-04 10:55:42</span>
<span class="a t" style="left:3646.80px;top:1576.99px;font-size:28.6px;line-height:28.6px;color:#ccccdc;letter-spacing:0.631px;-webkit-text-stroke:0.35px #ccccdc;">1718</span>
<div class="a " style="left:146px;top:1694px;width:3584px;height:2px;background:#25272c;"></div>
<span class="a t" style="left:157.20px;top:1646.59px;font-size:28.6px;line-height:28.6px;color:#ccccdc;letter-spacing:-0.145px;-webkit-text-stroke:0.35px #ccccdc;">2022-07-04 10:55:42</span>
<span class="a t" style="left:3646.80px;top:1646.99px;font-size:28.6px;line-height:28.6px;color:#ccccdc;letter-spacing:1.338px;-webkit-text-stroke:0.35px #ccccdc;">1156</span>
<div class="a " style="left:146px;top:1764px;width:3584px;height:2px;background:#25272c;"></div>
<span class="a t" style="left:157.20px;top:1716.59px;font-size:28.6px;line-height:28.6px;color:#ccccdc;letter-spacing:-0.145px;-webkit-text-stroke:0.35px #ccccdc;">2022-07-04 10:55:42</span>
<span class="a t" style="left:3646.80px;top:1716.99px;font-size:28.6px;line-height:28.6px;color:#ccccdc;letter-spacing:0.631px;-webkit-text-stroke:0.35px #ccccdc;">1358</span>
<div class="a " style="left:146px;top:1834px;width:3584px;height:2px;background:#25272c;"></div>
<span class="a t" style="left:157.20px;top:1786.59px;font-size:28.6px;line-height:28.6px;color:#ccccdc;letter-spacing:-0.145px;-webkit-text-stroke:0.35px #ccccdc;">2022-07-04 10:55:42</span>
<span class="a t" style="left:3646.80px;top:1786.99px;font-size:28.6px;line-height:28.6px;color:#ccccdc;letter-spacing:0.631px;-webkit-text-stroke:0.35px #ccccdc;">1529</span>
<span class="a t" style="left:157.20px;top:1856.59px;font-size:28.6px;line-height:28.6px;color:#ccccdc;letter-spacing:-0.145px;-webkit-text-stroke:0.35px #ccccdc;">2022-07-04 10:55:42</span>
<span class="a t" style="left:3646.80px;top:1856.99px;font-size:28.6px;line-height:28.6px;color:#ccccdc;letter-spacing:0.631px;-webkit-text-stroke:0.35px #ccccdc;">1889</span>
<div class="a " style="left:3730px;top:1556px;width:16px;height:100px;background:#474953;border:2px solid #0b0c0e;"></div>
<div class="a " style="left:3712px;top:493px;width:2px;height:46px;background:#2a2c32;"></div>
<div class="a " style="left:3780px;top:129px;width:16px;height:1192px;background:#2e2f35;border-radius:8px;"></div>
<div class="a " style="left:2649px;top:88px;width:1065px;height:64px;background:#111217;border:2px solid #45474e;border-radius:4px;box-shadow:0 0 0 4px #111217,0 0 0 8px #3d71d9;"></div>
<span class="a t" style="left:2666.40px;top:106.69px;font-size:28.6px;line-height:28.6px;color:#ccccdc;letter-spacing:-0.335px;-webkit-text-stroke:0.35px #ccccdc;">process<span class="u">_</span>energy</span>
<div class="a " style="left:2651px;top:149px;width:1061px;height:601px;background:#111217;box-shadow:0 30px 36px -14px rgba(1,4,9,0.85);clip-path:inset(0px -80px -100px -80px);"></div>
<svg class="a" style="left:3672px;top:118px;" width="15" height="9" viewBox="0 0 15 9"><path d="M1.5,7.5 L7.5,1.5 L13.5,7.5" fill="none" stroke="#8a8b98" stroke-width="3" stroke-linecap="round" stroke-linejoin="round"/></svg>
<span class="a t" style="left:2670.50px;top:181.59px;font-size:28.6px;line-height:28.6px;color:#ccccdc;letter-spacing:0.341px;-webkit-text-stroke:1.15px #ccccdc;">accumulatedProducts</span>
<span class="a t" style="left:2670.50px;top:255.59px;font-size:28.6px;line-height:28.6px;color:#ccccdc;letter-spacing:0.224px;-webkit-text-stroke:1.15px #ccccdc;">unstartedOrderTable</span>
<div class="a " style="left:2651px;top:306px;width:1061px;height:74px;background:#292a34;"></div>
<span class="a t" style="left:2670.50px;top:329.59px;font-size:28.6px;line-height:28.6px;color:#ccccdc;letter-spacing:-0.181px;-webkit-text-stroke:1.15px #ccccdc;">process<span class="u">_</span>energy</span>
<span class="a t" style="left:2670.50px;top:403.59px;font-size:28.6px;line-height:28.6px;color:#ccccdc;letter-spacing:-0.104px;-webkit-text-stroke:1.15px #ccccdc;">process<span class="u">_</span>energy2</span>
<span class="a t" style="left:2670.50px;top:477.59px;font-size:28.6px;line-height:28.6px;color:#ccccdc;letter-spacing:-0.104px;-webkit-text-stroke:1.15px #ccccdc;">process<span class="u">_</span>energy3</span>
<span class="a t" style="left:2670.50px;top:551.59px;font-size:28.6px;line-height:28.6px;color:#ccccdc;letter-spacing:-0.139px;-webkit-text-stroke:1.15px #ccccdc;">process<span class="u">_</span>energy4</span>
<span class="a t" style="left:2670.50px;top:625.59px;font-size:28.6px;line-height:28.6px;color:#ccccdc;letter-spacing:-0.104px;-webkit-text-stroke:1.15px #ccccdc;">process<span class="u">_</span>energy5</span>
<div class="a " style="left:2651px;top:676px;width:1061px;height:74px;background:#2e2f39;"></div>
<span class="a t" style="left:2670.50px;top:699.59px;font-size:28.6px;line-height:28.6px;color:#ccccdc;letter-spacing:-0.104px;-webkit-text-stroke:1.15px #ccccdc;">process<span class="u">_</span>energy6</span>
<div class="a " style="left:3696px;top:590px;width:16px;height:156px;background:rgba(204,204,220,0.16);border-radius:8px;"></div>
</body></html>
